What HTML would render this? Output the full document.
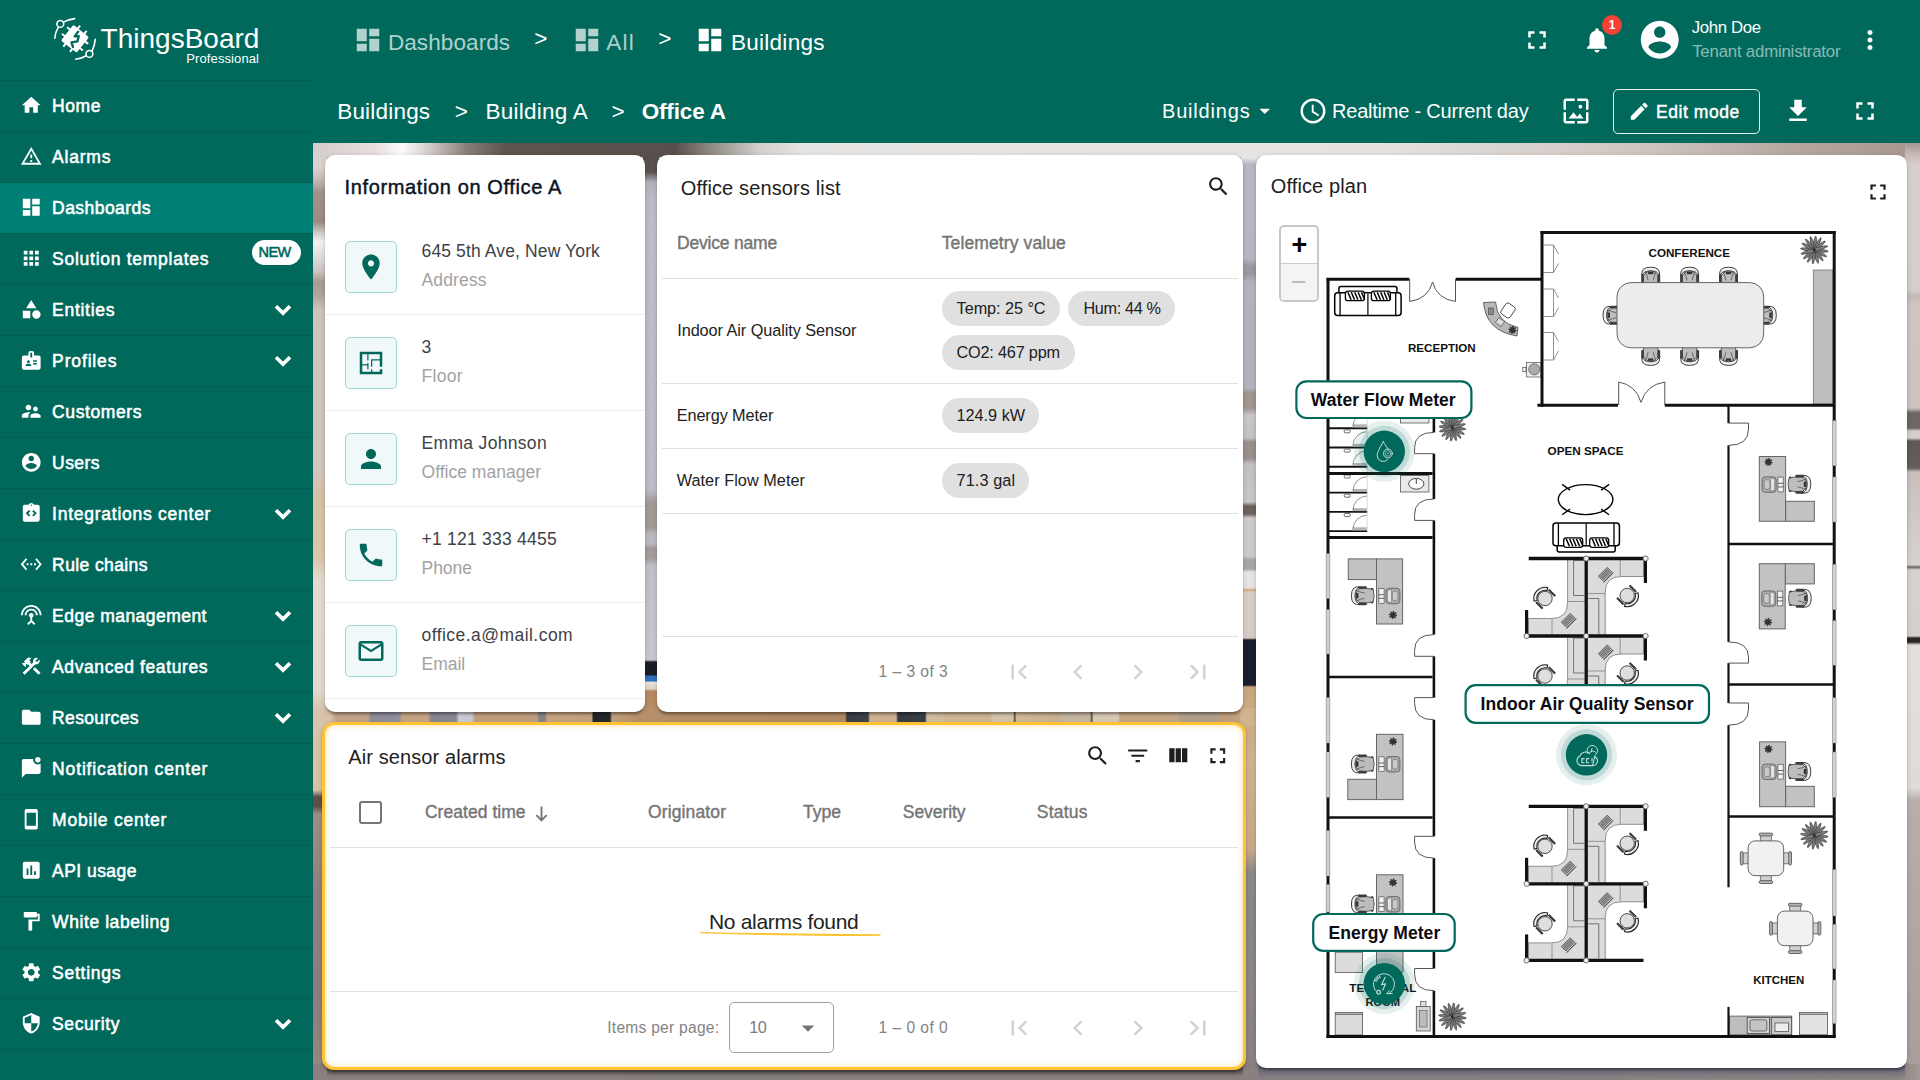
<!DOCTYPE html><html lang="en"><head><meta charset="utf-8"><title>Buildings - Office A</title><style>
html,body{margin:0;padding:0}
body{width:1920px;height:1080px;overflow:hidden;position:relative;font-family:"Liberation Sans",sans-serif;background:#cfc6c0}
.t{position:absolute;white-space:nowrap;line-height:1}
.i{position:absolute;display:block}
.b{position:absolute;box-sizing:border-box}
svg{overflow:visible}
</style></head><body>
<div class="b" style="left:313px;top:143px;width:1607px;height:937px;background:#c4bab5"></div>
<div class="b" style="left:313px;top:143px;width:1607px;height:14px;background:linear-gradient(90deg,#d7cdcb 0px,#e6dfdd 62px,#fbfafa 89px,#d2cbc8 117px,#857c77 155px,#5c544f 192px,#58504c 362px,#959089 402px,#d4d1cf 447px,#e7e5e3 492px,#e5e2e0 1067px,#cfc6c1 1327px,#b6a8a1 1477px,#a6968f 1607px)"></div>
<div class="b" style="left:313px;top:143px;width:14px;height:937px;background:linear-gradient(180deg,#d6cecb 0px,#d9d2cf 25px,#c4b9b5 37px,#a3928c 49px,#9c8a84 79px,#cfc8c6 89px,#f4f3f3 99px,#d9d5d5 119px,#c9c2c0 129px,#a89a94 139px,#b3a59e 153px,#d0c3bc 167px,#d3c6be 327px,#d8c0a8 352px,#dcc6ae 417px,#e3dad2 437px,#e2d8cf 547px,#d8c4ae 569px,#d9c3a8 647px,#5a5048 654px,#5a5048 663px,#9a908c 671px,#8b827f 757px,#8a817e 857px,#958c88 937px)"></div>
<div class="b" style="left:643px;top:155px;width:16px;height:567px;background:linear-gradient(180deg,#554e4a 0px,#5a5350 17px,#b2b0bb 27px,#bdbcc8 45px,#bebdc9 335px,#a39a98 347px,#a59c9a 373px,#bcb8bf 379px,#bcb8bf 389px,#a39a98 393px,#a69e9d 403px,#c2c0ca 411px,#c8c7d0 495px,#c8c7d0 505px,#1c1e26 507px,#1c1e26 520px,#2f6fc0 521px,#2f6fc0 526px,#e8e4de 527px,#e0d6c8 534px,#b58a62 536px,#b98f66 567px)"></div>
<div class="b" style="left:1241px;top:143px;width:17px;height:937px;background:linear-gradient(180deg,#e5e2e0 0px,#e8e6e6 15px,#b9b8c6 21px,#b8b7c5 115px,#9c99a3 123px,#9c99a3 131px,#b5b3bf 139px,#b4b2be 245px,#a39690 250px,#a39690 265px,#c9c6cc 272px,#c6c3c8 295px,#9c908c 299px,#9c908c 315px,#c4c1c4 321px,#cac7c8 359px,#6e625e 363px,#6e625e 371px,#cfcbcc 375px,#cfcbcc 413px,#a9a7a6 417px,#a9a7a6 426px,#e8e6e6 429px,#e6e2e0 445px,#d9a66e 447px,#d8cdc6 449px,#d8cdc6 495px,#1b1f2d 497px,#1b1f2d 542px,#c9a67f 544px,#d2b591 617px,#caa98a 707px,#8e8a8a 729px,#8b8684 925px,#8a8583 937px)"></div>
<div class="b" style="left:1905px;top:143px;width:15px;height:937px;background:linear-gradient(180deg,#a6968f 0px,#c9beb9 13px,#d8d0cc 22px,#d6cecb 147px,#c2b9b5 153px,#cfc6c2 161px,#cdc4c0 265px,#6e6663 270px,#6e6663 285px,#d5cecb 288px,#d5cecb 295px,#5f5855 298px,#665e5b 325px,#c9c0bc 329px,#d8d2cf 422px,#6b6461 424px,#d8d2cf 427px,#d6d0cd 493px,#2a2726 495px,#2a2726 499px,#e4e0dd 502px,#e0dbd8 645px,#b8afab 657px,#a99f9b 917px,#a39a96 937px)"></div>
<div class="b" style="left:313px;top:708px;width:943px;height:18px;background:linear-gradient(90deg,#d9c5ae 0px,#d6c0a8 18px,#c4a58a 23px,#c4a58a 55px,#8f8e9c 58px,#9291a0 86px,#c9a686 89px,#c9a686 115px,#8b8994 118px,#8d8b96 143px,#cfd0dc 146px,#cdcdd9 159px,#c4a282 162px,#c4a282 224px,#8a8588 226px,#8a8588 232px,#c9a582 234px,#c8a480 279px,#26272b 280px,#2a2b2f 297px,#c8a480 299px,#b8906c 327px,#b48c68 532px,#3a3f48 534px,#3d424b 555px,#d2b594 557px,#d0b392 583px,#373c45 585px,#3a3f48 612px,#d9c3a5 614px,#d6c0a2 629px,#d3b999 633px,#d3b999 677px,#d8c8ae 680px,#d8c8ae 700px,#4a4038 702px,#d6bb9a 703px,#cdb395 746px,#c9b9a4 748px,#c9b9a4 777px,#4a4038 779px,#dccdb8 780px,#dccdb8 805px,#c9a988 807px,#c9a988 864px,#b5a390 867px,#b5a390 906px,#c4a27c 908px,#c4a27c 926px,#d2b48e 928px,#d2b48e 943px)"></div>
<div class="b" style="left:313px;top:1064px;width:1607px;height:16px;background:linear-gradient(90deg,#8a817e 0px,#87807d 387px,#89817f 933px,#8c8582 1587px,#a39a96 1607px)"></div>
<div class="b" style="left:1258px;top:1064px;width:647px;height:16px;background:linear-gradient(180deg,#6b687f 4px,rgba(107,104,127,0) 15px)"></div>
<div class="b" style="left:327px;top:1066px;width:916px;height:14px;background:linear-gradient(180deg,rgba(90,84,88,0.9) 4px,rgba(90,84,88,0) 11px)"></div>
<div class="b" style="left:0;top:0;width:313px;height:1080px;background:#00695c"></div>
<svg class="i" style="left:0;top:0;width:130px;height:80px" viewBox="0 0 130 80"><g fill="none" stroke="#fff" stroke-width="1.6" stroke-linecap="round"><path d="M74.7 18.6 Q68.5 19.3 63.8 21.9"/><path d="M58.2 27.4 Q55.2 32.5 54.7 38.3"/><circle cx="60.3" cy="23.9" r="3.4"/><path d="M95.3 39.4 Q94.6 46 92.1 50.8"/><path d="M86.1 55.7 Q81.5 58.6 75.6 59.2"/><circle cx="89.4" cy="53.9" r="3.4"/></g><g transform="translate(75 38.8) rotate(38.5)"><g stroke="#fff" stroke-width="2" stroke-linecap="butt"><line x1="-4.2" y1="-13.4" x2="-4.2" y2="13.4"/><line x1="-13.4" y1="-4.2" x2="13.4" y2="-4.2"/><line x1="4.2" y1="-13.4" x2="4.2" y2="13.4"/><line x1="-13.4" y1="4.2" x2="13.4" y2="4.2"/></g><rect x="-10" y="-10" width="20" height="20" rx="1.6" fill="#fff"/></g><path d="M78.2 31.6 L74.6 36.4 L78.8 36.2 L77.4 41.4 L71.4 42.4 L73 47" fill="none" stroke="#00695c" stroke-width="2.3" stroke-linejoin="round" stroke-linecap="round"/></svg>
<span class="t" style="letter-spacing:0.003px;left:100.60px;top:25.00px;font-size:28px;color:#fff;">ThingsBoard</span>
<span class="t" style="letter-spacing:0.096px;left:186.35px;top:52.00px;font-size:13px;color:#fff;">Professional</span>
<div class="b" style="left:0;top:80px;width:313px;height:1px;background:#005d51"></div>
<svg class="i" viewBox="0 0 24 24" style="left:19.95px;top:94.45px;width:22.5px;height:22.5px;fill:#fff;"><path d="M10 20v-6h4v6h5v-8h3L12 3 2 12h3v8z"/></svg>
<span class="t" style="letter-spacing:0.554px;left:52.12px;top:98.00px;font-size:17.5px;color:#fff;-webkit-text-stroke:0.55px #fff;">Home</span>
<div class="b" style="left:0;top:131px;width:313px;height:1px;background:#005d51"></div>
<svg class="i" viewBox="0 0 24 24" style="left:19.95px;top:145.45px;width:22.5px;height:22.5px;fill:#fff;"><path d="M12 5.99L19.53 19H4.47L12 5.99M12 2L1 21h22L12 2zm1 14h-2v2h2v-2zm0-6h-2v4h2v-4z"/></svg>
<span class="t" style="letter-spacing:0.779px;left:52.12px;top:149.00px;font-size:17.5px;color:#fff;-webkit-text-stroke:0.55px #fff;">Alarms</span>
<div class="b" style="left:0;top:183px;width:313px;height:50px;background:#008075"></div>
<div class="b" style="left:0;top:182px;width:313px;height:1px;background:#005d51"></div>
<svg class="i" viewBox="0 0 24 24" style="left:19.95px;top:196.45px;width:22.5px;height:22.5px;fill:#fff;"><path d="M3 13h8V3H3v10zm0 8h8v-6H3v6zm10 0h8V11h-8v10zm0-18v6h8V3h-8z"/></svg>
<span class="t" style="letter-spacing:0.442px;left:52.12px;top:200.00px;font-size:17.5px;color:#fff;-webkit-text-stroke:0.55px #fff;">Dashboards</span>
<div class="b" style="left:0;top:233px;width:313px;height:1px;background:#005d51"></div>
<svg class="i" viewBox="0 0 24 24" style="left:19.95px;top:247.45px;width:22.5px;height:22.5px;fill:#fff;"><path d="M4 8h4V4H4v4zm6 12h4v-4h-4v4zm-6 0h4v-4H4v4zm0-6h4v-4H4v4zm6 0h4v-4h-4v4zm6-10v4h4V4h-4zm-6 4h4V4h-4v4zm6 6h4v-4h-4v4zm0 6h4v-4h-4v4z"/></svg>
<span class="t" style="letter-spacing:0.727px;left:52.12px;top:251.00px;font-size:17.5px;color:#fff;-webkit-text-stroke:0.55px #fff;">Solution templates</span>
<div class="b" style="left:251.5px;top:239.5px;width:49px;height:25px;border-radius:13px;background:#fff"></div>
<span class="t" style="letter-spacing:-0.547px;left:258.57px;top:245.00px;font-size:14.5px;color:#00695c;-webkit-text-stroke:0.55px #00695c;">NEW</span>
<div class="b" style="left:0;top:284px;width:313px;height:1px;background:#005d51"></div>
<svg class="i" viewBox="0 0 24 24" style="left:19.95px;top:298.45px;width:22.5px;height:22.5px;fill:#fff;"><path d="M12 2l-5.5 9h11zM17.5 13a4.5 4.5 0 1 0 0 9a4.5 4.5 0 1 0 0-9zM3 13.5h8v8H3z"/></svg>
<span class="t" style="letter-spacing:0.708px;left:52.12px;top:302.00px;font-size:17.5px;color:#fff;-webkit-text-stroke:0.55px #fff;">Entities</span>
<svg class="i" viewBox="0 0 24 24" style="left:268.00px;top:294.50px;width:30px;height:30px;fill:#fff;stroke:#fff;stroke-width:0.9"><path d="M16.590 8.590L12 13.170 7.410 8.590 6 10l6 6 6-6z"/></svg>
<div class="b" style="left:0;top:335px;width:313px;height:1px;background:#005d51"></div>
<svg class="i" viewBox="0 0 24 24" style="left:19.95px;top:349.45px;width:22.5px;height:22.5px;fill:#fff;"><path d="M20 7h-5V4c0-1.1-.9-2-2-2h-2c-1.1 0-2 .9-2 2v3H4c-1.1 0-2 .9-2 2v11c0 1.1.9 2 2 2h16c1.1 0 2-.9 2-2V9c0-1.1-.9-2-2-2zM9 12c.83 0 1.5.67 1.5 1.5S9.83 15 9 15s-1.5-.67-1.5-1.5S8.17 12 9 12zm3 6H6v-.75c0-1 2-1.5 3-1.5s3 .5 3 1.5V18zm1-9h-2V4h2v5zm5 7.5h-4V15h4v1.5zm0-3h-4V12h4v1.5z"/></svg>
<span class="t" style="letter-spacing:0.856px;left:52.12px;top:353.00px;font-size:17.5px;color:#fff;-webkit-text-stroke:0.55px #fff;">Profiles</span>
<svg class="i" viewBox="0 0 24 24" style="left:268.00px;top:345.50px;width:30px;height:30px;fill:#fff;stroke:#fff;stroke-width:0.9"><path d="M16.590 8.590L12 13.170 7.410 8.590 6 10l6 6 6-6z"/></svg>
<div class="b" style="left:0;top:386px;width:313px;height:1px;background:#005d51"></div>
<svg class="i" viewBox="0 0 24 24" style="left:19.95px;top:400.45px;width:22.5px;height:22.5px;fill:#fff;"><path d="M16.5 12c1.38 0 2.49-1.12 2.49-2.5S17.88 7 16.5 7C15.12 7 14 8.12 14 9.5s1.12 2.5 2.5 2.5zM9 11c1.66 0 2.99-1.34 2.99-3S10.66 5 9 5C7.34 5 6 6.34 6 8s1.34 3 3 3zm7.5 3c-1.83 0-5.5.92-5.5 2.75V19h11v-2.25c0-1.83-3.67-2.75-5.5-2.75zM9 13c-2.33 0-7 1.17-7 3.5V19h7v-2.25c0-.85.33-2.34 2.37-3.47C10.5 13.1 9.66 13 9 13z"/></svg>
<span class="t" style="letter-spacing:0.593px;left:52.12px;top:404.00px;font-size:17.5px;color:#fff;-webkit-text-stroke:0.55px #fff;">Customers</span>
<div class="b" style="left:0;top:437px;width:313px;height:1px;background:#005d51"></div>
<svg class="i" viewBox="0 0 24 24" style="left:19.95px;top:451.45px;width:22.5px;height:22.5px;fill:#fff;"><path d="M12 2C6.48 2 2 6.48 2 12s4.48 10 10 10 10-4.48 10-10S17.52 2 12 2zm0 3c1.66 0 3 1.34 3 3s-1.34 3-3 3-3-1.34-3-3 1.34-3 3-3zm0 14.2c-2.5 0-4.71-1.28-6-3.22.03-1.99 4-3.08 6-3.08 1.99 0 5.97 1.09 6 3.08-1.29 1.94-3.5 3.22-6 3.22z"/></svg>
<span class="t" style="letter-spacing:0.412px;left:52.12px;top:455.00px;font-size:17.5px;color:#fff;-webkit-text-stroke:0.55px #fff;">Users</span>
<div class="b" style="left:0;top:488px;width:313px;height:1px;background:#005d51"></div>
<svg class="i" viewBox="0 0 24 24" style="left:19.95px;top:502.45px;width:22.5px;height:22.5px;fill:#fff;"><path d="M19 3h-4.18C14.4 1.84 13.3 1 12 1c-1.3 0-2.4.84-2.82 2H5c-.14 0-.27.01-.4.04-.39.08-.74.28-1.01.55-.18.18-.33.4-.43.64-.1.23-.16.49-.16.77v14c0 .27.06.54.16.78s.25.45.43.64c.27.27.62.47 1.01.55.13.02.26.03.4.03h14c1.1 0 2-.9 2-2V5c0-1.1-.9-2-2-2zm-8 11.170l-1.410 1.420L6 12l3.590-3.590L11 9.830 8.830 12 11 14.170zm1-9.920c-.41 0-.75-.34-.75-.75s.34-.75.75-.75.75.34.75.75-.34.75-.75.75zm2.410 11.340L13 14.170 15.170 12 13 9.830l1.410-1.420L18 12l-3.590 3.590z"/></svg>
<span class="t" style="letter-spacing:0.744px;left:52.12px;top:506.00px;font-size:17.5px;color:#fff;-webkit-text-stroke:0.55px #fff;">Integrations center</span>
<svg class="i" viewBox="0 0 24 24" style="left:268.00px;top:498.50px;width:30px;height:30px;fill:#fff;stroke:#fff;stroke-width:0.9"><path d="M16.590 8.590L12 13.170 7.410 8.590 6 10l6 6 6-6z"/></svg>
<div class="b" style="left:0;top:539px;width:313px;height:1px;background:#005d51"></div>
<svg class="i" viewBox="0 0 24 24" style="left:19.95px;top:553.45px;width:22.5px;height:22.5px;fill:#fff;"><path d="M7.77 6.76L6.23 5.48.82 12l5.41 6.52 1.54-1.28L3.42 12l4.35-5.24zM7 13h2v-2H7v2zm10-2h-2v2h2v-2zm-6 2h2v-2h-2v2zm6.77-7.520l-1.540 1.280L20.580 12l-4.350 5.240 1.540 1.280L23.180 12l-5.410-6.520z"/></svg>
<span class="t" style="letter-spacing:0.390px;left:52.12px;top:557.00px;font-size:17.5px;color:#fff;-webkit-text-stroke:0.55px #fff;">Rule chains</span>
<div class="b" style="left:0;top:590px;width:313px;height:1px;background:#005d51"></div>
<svg class="i" viewBox="0 0 24 24" style="left:19.95px;top:604.45px;width:22.5px;height:22.5px;fill:#fff;"><path d="M12 5c-3.870 0-7 3.130-7 7h2c0-2.760 2.240-5 5-5s5 2.240 5 5h2c0-3.870-3.130-7-7-7zm1 9.290c.880-.390 1.500-1.260 1.500-2.290 0-1.380-1.120-2.500-2.500-2.500S9.500 10.620 9.500 12c0 1.020.620 1.900 1.500 2.290v3.300L7.590 21 9 22.410l3-3 3 3L16.410 21 13 17.590v-3.300zM12 1C5.930 1 1 5.930 1 12h2c0-4.970 4.030-9 9-9s9 4.030 9 9h2c0-6.070-4.930-11-11-11z"/></svg>
<span class="t" style="letter-spacing:0.461px;left:52.12px;top:608.00px;font-size:17.5px;color:#fff;-webkit-text-stroke:0.55px #fff;">Edge management</span>
<svg class="i" viewBox="0 0 24 24" style="left:268.00px;top:600.50px;width:30px;height:30px;fill:#fff;stroke:#fff;stroke-width:0.9"><path d="M16.590 8.590L12 13.170 7.410 8.590 6 10l6 6 6-6z"/></svg>
<div class="b" style="left:0;top:641px;width:313px;height:1px;background:#005d51"></div>
<svg class="i" viewBox="0 0 24 24" style="left:19.95px;top:655.45px;width:22.5px;height:22.5px;fill:#fff;"><path d="M13.783 15.172l2.121-2.121 5.996 5.996-2.121 2.121zM17.5 10c1.930 0 3.500-1.570 3.500-3.500 0-.580-.160-1.120-.410-1.600l-2.700 2.700-1.490-1.490 2.700-2.700c-.480-.250-1.020-.410-1.600-.410C15.570 3 14 4.570 14 6.500c0 .410.080.800.210 1.160l-1.850 1.850-1.780-1.780.710-.710-1.410-1.410L12 3.490c-1.170-1.170-3.070-1.170-4.240 0L4.220 7.030l1.410 1.410H2.810l-.710.710 3.540 3.540.710-.710V9.150l1.410 1.410.710-.710 1.780 1.780-7.410 7.410 2.120 2.120L16.340 9.790c.360.130.750.210 1.160.210z"/></svg>
<span class="t" style="letter-spacing:0.588px;left:52.12px;top:659.00px;font-size:17.5px;color:#fff;-webkit-text-stroke:0.55px #fff;">Advanced features</span>
<svg class="i" viewBox="0 0 24 24" style="left:268.00px;top:651.50px;width:30px;height:30px;fill:#fff;stroke:#fff;stroke-width:0.9"><path d="M16.590 8.590L12 13.170 7.410 8.590 6 10l6 6 6-6z"/></svg>
<div class="b" style="left:0;top:692px;width:313px;height:1px;background:#005d51"></div>
<svg class="i" viewBox="0 0 24 24" style="left:19.95px;top:706.45px;width:22.5px;height:22.5px;fill:#fff;"><path d="M10 4H4c-1.100 0-1.990.900-1.990 2L2 18c0 1.100.900 2 2 2h16c1.100 0 2-.900 2-2V8c0-1.100-.900-2-2-2h-8l-2-2z"/></svg>
<span class="t" style="letter-spacing:0.337px;left:52.12px;top:710.00px;font-size:17.5px;color:#fff;-webkit-text-stroke:0.55px #fff;">Resources</span>
<svg class="i" viewBox="0 0 24 24" style="left:268.00px;top:702.50px;width:30px;height:30px;fill:#fff;stroke:#fff;stroke-width:0.9"><path d="M16.590 8.590L12 13.170 7.410 8.590 6 10l6 6 6-6z"/></svg>
<div class="b" style="left:0;top:743px;width:313px;height:1px;background:#005d51"></div>
<svg class="i" viewBox="0 0 24 24" style="left:19.95px;top:757.45px;width:22.5px;height:22.5px;fill:#fff;"><path d="M22 6.980V16c0 1.100-.900 2-2 2H6l-4 4V4c0-1.100.900-2 2-2h10.100c-.060.320-.100.660-.100 1 0 2.760 2.240 5 5 5 1.130 0 2.160-.390 3-1.020zM16 3c0 1.660 1.340 3 3 3s3-1.340 3-3-1.340-3-3-3-3 1.340-3 3z"/></svg>
<span class="t" style="letter-spacing:0.848px;left:52.12px;top:761.00px;font-size:17.5px;color:#fff;-webkit-text-stroke:0.55px #fff;">Notification center</span>
<div class="b" style="left:0;top:794px;width:313px;height:1px;background:#005d51"></div>
<svg class="i" viewBox="0 0 24 24" style="left:19.95px;top:808.45px;width:22.5px;height:22.5px;fill:#fff;"><path d="M17 1.010L7 1c-1.100 0-2 .900-2 2v18c0 1.100.900 2 2 2h10c1.100 0 2-.900 2-2V3c0-1.100-.900-1.990-2-1.990zM17 19H7V5h10v14z"/></svg>
<span class="t" style="letter-spacing:0.774px;left:52.12px;top:812.00px;font-size:17.5px;color:#fff;-webkit-text-stroke:0.55px #fff;">Mobile center</span>
<div class="b" style="left:0;top:845px;width:313px;height:1px;background:#005d51"></div>
<svg class="i" viewBox="0 0 24 24" style="left:19.95px;top:859.45px;width:22.5px;height:22.5px;fill:#fff;"><path d="M19 3H5c-1.100 0-2 .900-2 2v14c0 1.100.900 2 2 2h14c1.100 0 2-.900 2-2V5c0-1.100-.900-2-2-2zM9 17H7v-7h2v7zm4 0h-2V7h2v10zm4 0h-2v-4h2v4z"/></svg>
<span class="t" style="letter-spacing:0.450px;left:52.12px;top:863.00px;font-size:17.5px;color:#fff;-webkit-text-stroke:0.55px #fff;">API usage</span>
<div class="b" style="left:0;top:896px;width:313px;height:1px;background:#005d51"></div>
<svg class="i" viewBox="0 0 24 24" style="left:19.95px;top:910.45px;width:22.5px;height:22.5px;fill:#fff;"><path d="M18 4V3c0-.550-.450-1-1-1H5c-.550 0-1 .450-1 1v4c0 .550.450 1 1 1h12c.550 0 1-.450 1-1V6h1v4H9v11c0 .550.450 1 1 1h2c.550 0 1-.450 1-1v-9h8V4h-3z"/></svg>
<span class="t" style="letter-spacing:0.571px;left:52.12px;top:914.00px;font-size:17.5px;color:#fff;-webkit-text-stroke:0.55px #fff;">White labeling</span>
<div class="b" style="left:0;top:947px;width:313px;height:1px;background:#005d51"></div>
<svg class="i" viewBox="0 0 24 24" style="left:19.95px;top:961.45px;width:22.5px;height:22.5px;fill:#fff;"><path d="M19.140 12.940c.040-.300.060-.610.060-.940 0-.320-.020-.640-.070-.940l2.030-1.580c.180-.140.230-.410.120-.610l-1.920-3.320c-.120-.220-.370-.290-.590-.220l-2.390.960c-.500-.380-1.030-.700-1.620-.940l-.360-2.540c-.040-.240-.240-.410-.480-.410h-3.840c-.240 0-.430.170-.470.410l-.360 2.540c-.590.240-1.130.570-1.620.940l-2.390-.960c-.220-.080-.470 0-.590.220L2.740 8.870c-.120.210-.080.470.120.610l2.030 1.580c-.050.300-.090.630-.090.940s.020.640.070.940l-2.030 1.580c-.180.140-.230.410-.120.610l1.920 3.320c.120.220.370.290.590.220l2.390-.960c.500.380 1.030.700 1.620.940l.360 2.540c.050.240.240.410.480.410h3.840c.240 0 .440-.170.470-.410l.360-2.540c.590-.240 1.130-.560 1.620-.940l2.390.960c.220.080.470 0 .590-.220l1.920-3.320c.120-.220.070-.470-.120-.610l-2.010-1.580zM12 15.600c-1.980 0-3.600-1.620-3.600-3.600s1.620-3.600 3.600-3.600 3.600 1.620 3.600 3.600-1.620 3.600-3.600 3.600z"/></svg>
<span class="t" style="letter-spacing:0.731px;left:52.12px;top:965.00px;font-size:17.5px;color:#fff;-webkit-text-stroke:0.55px #fff;">Settings</span>
<div class="b" style="left:0;top:998px;width:313px;height:1px;background:#005d51"></div>
<svg class="i" viewBox="0 0 24 24" style="left:19.95px;top:1012.45px;width:22.5px;height:22.5px;fill:#fff;"><path d="M12 1L3 5v6c0 5.550 3.840 10.740 9 12 5.160-1.260 9-6.450 9-12V5l-9-4zm0 10.990h7c-.530 4.120-3.280 7.790-7 8.940V12H5V6.300l7-3.110v8.800z"/></svg>
<span class="t" style="letter-spacing:0.590px;left:52.12px;top:1016.00px;font-size:17.5px;color:#fff;-webkit-text-stroke:0.55px #fff;">Security</span>
<svg class="i" viewBox="0 0 24 24" style="left:268.00px;top:1008.50px;width:30px;height:30px;fill:#fff;stroke:#fff;stroke-width:0.9"><path d="M16.590 8.590L12 13.170 7.410 8.590 6 10l6 6 6-6z"/></svg>
<div class="b" style="left:0;top:1049px;width:313px;height:1px;background:#005d51"></div>
<div class="b" style="left:313px;top:0;width:1607px;height:143px;background:#00695c"></div>
<svg class="i" viewBox="0 0 24 24" style="left:352.50px;top:24.50px;width:30px;height:30px;fill:rgba(255,255,255,0.7);"><path d="M3 13h8V3H3v10zm0 8h8v-6H3v6zm10 0h8V11h-8v10zm0-18v6h8V3h-8z"/></svg>
<span class="t" style="letter-spacing:0.102px;left:387.88px;top:32.00px;font-size:22.5px;color:rgba(255,255,255,0.7);">Dashboards</span>
<span class="t" style="letter-spacing:0.109px;left:534.27px;top:28.00px;font-size:22.5px;color:#fff;">&gt;</span>
<svg class="i" viewBox="0 0 24 24" style="left:571.80px;top:24.50px;width:30px;height:30px;fill:rgba(255,255,255,0.7);"><path d="M3 13h8V3H3v10zm0 8h8v-6H3v6zm10 0h8V11h-8v10zm0-18v6h8V3h-8z"/></svg>
<span class="t" style="letter-spacing:1.267px;left:606.27px;top:32.00px;font-size:22.5px;color:rgba(255,255,255,0.7);">All</span>
<span class="t" style="letter-spacing:0.109px;left:658.27px;top:28.00px;font-size:22.5px;color:#fff;">&gt;</span>
<svg class="i" viewBox="0 0 24 24" style="left:695.20px;top:24.50px;width:30px;height:30px;fill:#fff;"><path d="M3 13h8V3H3v10zm0 8h8v-6H3v6zm10 0h8V11h-8v10zm0-18v6h8V3h-8z"/></svg>
<span class="t" style="letter-spacing:0.292px;left:730.88px;top:32.00px;font-size:22.5px;color:#fff;">Buildings</span>
<svg class="i" viewBox="0 0 24 24" style="left:1522.40px;top:25.00px;width:30px;height:30px;fill:#fff;"><path d="M7 14H5v5h5v-2H7v-3zm-2-4h2V7h3V5H5v5zm12 7h-3v2h5v-5h-2v3zM14 5v2h3v3h2V5h-5z"/></svg>
<svg class="i" viewBox="0 0 24 24" style="left:1582.30px;top:25.00px;width:30px;height:30px;fill:#fff;"><path d="M12 22c1.100 0 2-.900 2-2h-4c0 1.100.890 2 2 2zm6-6v-5c0-3.070-1.640-5.640-4.500-6.320V4c0-.830-.670-1.500-1.500-1.500s-1.500.670-1.500 1.500v.680C7.630 5.360 6 7.920 6 11v5l-2 2v1h16v-1l-2-2z"/></svg>
<div class="b" style="left:1602px;top:15px;width:20px;height:20px;border-radius:10px;background:#f44336"></div>
<span class="t" style="left:1608.70px;top:19.00px;font-size:12px;color:#fff;font-weight:700;">1</span>
<svg class="i" viewBox="0 0 24 24" style="left:1637.25px;top:17.45px;width:45.5px;height:45.5px;fill:#fff;"><path d="M12 2C6.48 2 2 6.48 2 12s4.48 10 10 10 10-4.48 10-10S17.52 2 12 2zm0 3c1.66 0 3 1.34 3 3s-1.34 3-3 3-3-1.34-3-3 1.34-3 3-3zm0 14.2c-2.5 0-4.71-1.28-6-3.22.03-1.99 4-3.08 6-3.08 1.99 0 5.97 1.09 6 3.08-1.29 1.94-3.5 3.22-6 3.22z"/></svg>
<span class="t" style="letter-spacing:-0.338px;left:1691.66px;top:20.00px;font-size:16.8px;color:#fff;">John Doe</span>
<span class="t" style="letter-spacing:-0.193px;left:1692.16px;top:44.00px;font-size:16.8px;color:rgba(255,255,255,0.55);">Tenant administrator</span>
<svg class="i" viewBox="0 0 24 24" style="left:1855.00px;top:25.00px;width:30px;height:30px;fill:#fff;"><path d="M12 8c1.100 0 2-.900 2-2s-.900-2-2-2-2 .900-2 2 .900 2 2 2zm0 2c-1.100 0-2 .900-2 2s.900 2 2 2 2-.900 2-2-.900-2-2-2zm0 6c-1.100 0-2 .900-2 2s.900 2 2 2 2-.900 2-2-.900-2-2-2z"/></svg>
<span class="t" style="letter-spacing:0.205px;left:337.18px;top:101.00px;font-size:22.5px;color:#fff;">Buildings</span>
<span class="t" style="letter-spacing:-0.391px;left:454.68px;top:101.00px;font-size:22.5px;color:#fff;">&gt;</span>
<span class="t" style="letter-spacing:0.252px;left:485.38px;top:101.00px;font-size:22.5px;color:#fff;">Building A</span>
<span class="t" style="letter-spacing:-0.391px;left:611.38px;top:101.00px;font-size:22.5px;color:#fff;">&gt;</span>
<span class="t" style="letter-spacing:-0.141px;left:641.67px;top:101.00px;font-size:22.5px;color:#fff;font-weight:700;">Office A</span>
<span class="t" style="letter-spacing:0.816px;left:1162.00px;top:101.00px;font-size:20px;color:#fff;">Buildings</span>
<svg class="i" viewBox="0 0 24 24" style="left:1252.45px;top:97.85px;width:25.5px;height:25.5px;fill:#fff;"><path d="M7 10l5 5 5-5z"/></svg>
<svg class="i" viewBox="0 0 24 24" style="left:1297.50px;top:95.80px;width:30px;height:30px;fill:#fff;"><path d="M11.990 2C6.470 2 2 6.480 2 12s4.470 10 9.990 10C17.520 22 22 17.520 22 12S17.520 2 11.990 2zM12 20c-4.420 0-8-3.580-8-8s3.580-8 8-8 8 3.580 8 8-3.580 8-8 8zm.500-13H11v6l5.250 3.150.750-1.230-4.500-2.670z"/></svg>
<span class="t" style="letter-spacing:-0.214px;left:1332.00px;top:101.00px;font-size:20px;color:#fff;">Realtime - Current day</span>
<svg class="i" viewBox="0 0 24 24" style="left:1560.60px;top:96.00px;width:30px;height:30px;fill:#fff;"><path d="M4 4h7V2H4c-1.100 0-2 .900-2 2v7h2V4zm6 9l-4 5h12l-3-4-2.030 2.710L10 13zm7-4.500c0-.830-.670-1.500-1.500-1.500S14 7.670 14 8.500s.670 1.500 1.500 1.500S17 9.330 17 8.500zM20 2h-7v2h7v7h2V4c0-1.100-.900-2-2-2zm0 18h-7v2h7c1.100 0 2-.900 2-2v-7h-2v7zM4 13H2v7c0 1.100.900 2 2 2h7v-2H4v-7z"/></svg>
<div class="b" style="left:1613px;top:89px;width:147px;height:45px;border:1px solid rgba(255,255,255,0.9);border-radius:5px"></div>
<svg class="i" viewBox="0 0 24 24" style="left:1627.85px;top:99.75px;width:22.5px;height:22.5px;fill:#fff;"><path d="M3 17.250V21h3.750L17.810 9.940l-3.750-3.750L3 17.250zM20.710 7.040c.390-.390.390-1.020 0-1.410l-2.340-2.340c-.390-.390-1.020-.390-1.410 0l-1.830 1.830 3.750 3.750 1.830-1.830z"/></svg>
<span class="t" style="letter-spacing:0.544px;left:1656.12px;top:104.00px;font-size:17.5px;color:#fff;-webkit-text-stroke:0.45px #fff;">Edit mode</span>
<svg class="i" viewBox="0 0 24 24" style="left:1782.50px;top:96.00px;width:30px;height:30px;fill:#fff;"><path d="M19 9h-4V3H9v6H5l7 7 7-7zM5 18v2h14v-2H5z"/></svg>
<svg class="i" viewBox="0 0 24 24" style="left:1850.00px;top:96.00px;width:30px;height:30px;fill:#fff;"><path d="M7 14H5v5h5v-2H7v-3zm-2-4h2V7h3V5H5v5zm12 7h-3v2h5v-5h-2v3zM14 5v2h3v3h2V5h-5z"/></svg>
<div class="b" style="left:325px;top:155px;width:320px;height:557px;background:#fff;border-radius:10px;box-shadow:0 3.75px 1.25px -2.5px rgba(0,0,0,.2),0 2.5px 2.5px 0 rgba(0,0,0,.14),0 1.25px 6.25px 0 rgba(0,0,0,.12)"></div>
<span class="t" style="letter-spacing:0.624px;left:344.60px;top:177.00px;font-size:20px;color:#0a1426;-webkit-text-stroke:0.45px #0a1426;">Information on Office A</span>
<div class="b" style="left:345px;top:241px;width:52px;height:52px;border-radius:5px;background:#f0f8f9;border:1px solid #9adbd3"></div>
<svg class="i" viewBox="0 0 24 24" style="left:356.00px;top:251.90px;width:30px;height:30px;fill:#00695c;"><path d="M12 2C8.130 2 5 5.130 5 9c0 5.250 7 13 7 13s7-7.750 7-13c0-3.870-3.130-7-7-7zm0 9.500c-1.380 0-2.500-1.120-2.500-2.500s1.120-2.500 2.500-2.500 2.500 1.120 2.500 2.500-1.120 2.500-2.500 2.500z"/></svg>
<span class="t" style="letter-spacing:0.128px;left:421.52px;top:243.00px;font-size:17.5px;color:#3e4247;">645 5th Ave, New York</span>
<span class="t" style="letter-spacing:0.141px;left:421.52px;top:272.00px;font-size:17.5px;color:#a2a2a2;">Address</span>
<div class="b" style="left:325px;top:314px;width:320px;height:1px;background:#ececec"></div>
<div class="b" style="left:345px;top:337px;width:52px;height:52px;border-radius:5px;background:#f0f8f9;border:1px solid #9adbd3"></div>
<svg class="i" viewBox="0 0 24 24" style="left:356.00px;top:347.90px;width:30px;height:30px;fill:#00695c;"><path d="M10,5V10H9V5H5V13H9V12H10V17H9V14H5V19H12V17H13V19H19V17H21V21H3V3H21V15H19V10H13V15H12V9H19V5H10Z"/></svg>
<span class="t" style="letter-spacing:0.516px;left:421.52px;top:339.00px;font-size:17.5px;color:#3e4247;">3</span>
<span class="t" style="letter-spacing:0.294px;left:421.52px;top:368.00px;font-size:17.5px;color:#a2a2a2;">Floor</span>
<div class="b" style="left:325px;top:410px;width:320px;height:1px;background:#ececec"></div>
<div class="b" style="left:345px;top:433px;width:52px;height:52px;border-radius:5px;background:#f0f8f9;border:1px solid #9adbd3"></div>
<svg class="i" viewBox="0 0 24 24" style="left:356.00px;top:443.90px;width:30px;height:30px;fill:#00695c;"><path d="M12 12c2.210 0 4-1.790 4-4s-1.790-4-4-4-4 1.790-4 4 1.790 4 4 4zm0 2c-2.670 0-8 1.340-8 4v2h16v-2c0-2.660-5.330-4-8-4z"/></svg>
<span class="t" style="letter-spacing:0.323px;left:421.52px;top:435.00px;font-size:17.5px;color:#3e4247;">Emma Johnson</span>
<span class="t" style="letter-spacing:0.009px;left:421.52px;top:464.00px;font-size:17.5px;color:#a2a2a2;">Office manager</span>
<div class="b" style="left:325px;top:506px;width:320px;height:1px;background:#ececec"></div>
<div class="b" style="left:345px;top:529px;width:52px;height:52px;border-radius:5px;background:#f0f8f9;border:1px solid #9adbd3"></div>
<svg class="i" viewBox="0 0 24 24" style="left:356.00px;top:539.90px;width:30px;height:30px;fill:#00695c;"><path d="M6.620 10.790c1.440 2.830 3.760 5.140 6.590 6.590l2.200-2.200c.270-.270.670-.360 1.020-.240 1.120.370 2.330.570 3.570.570.550 0 1 .450 1 1V20c0 .550-.450 1-1 1-9.390 0-17-7.610-17-17 0-.550.450-1 1-1h3.500c.550 0 1 .450 1 1 0 1.250.200 2.450.570 3.570.110.350.030.740-.250 1.020l-2.200 2.200z"/></svg>
<span class="t" style="letter-spacing:0.234px;left:421.52px;top:531.00px;font-size:17.5px;color:#3e4247;">+1 121 333 4455</span>
<span class="t" style="letter-spacing:-0.040px;left:421.52px;top:560.00px;font-size:17.5px;color:#a2a2a2;">Phone</span>
<div class="b" style="left:325px;top:602px;width:320px;height:1px;background:#ececec"></div>
<div class="b" style="left:345px;top:625px;width:52px;height:52px;border-radius:5px;background:#f0f8f9;border:1px solid #9adbd3"></div>
<svg class="i" viewBox="0 0 24 24" style="left:356.00px;top:635.90px;width:30px;height:30px;fill:#00695c;"><path d="M20 4H4c-1.100 0-1.990.900-1.990 2L2 18c0 1.100.900 2 2 2h16c1.100 0 2-.900 2-2V6c0-1.100-.900-2-2-2zm0 14H4V8l8 5 8-5v10zm-8-7L4 6h16l-8 5z"/></svg>
<span class="t" style="letter-spacing:0.454px;left:421.52px;top:627.00px;font-size:17.5px;color:#3e4247;">office.a@mail.com</span>
<span class="t" style="letter-spacing:-0.004px;left:421.52px;top:656.00px;font-size:17.5px;color:#a2a2a2;">Email</span>
<div class="b" style="left:325px;top:698px;width:320px;height:1px;background:#ececec"></div>
<div class="b" style="left:657px;top:155px;width:586px;height:557px;background:#fff;border-radius:10px;box-shadow:0 3.75px 1.25px -2.5px rgba(0,0,0,.2),0 2.5px 2.5px 0 rgba(0,0,0,.14),0 1.25px 6.25px 0 rgba(0,0,0,.12)"></div>
<span class="t" style="letter-spacing:0.135px;left:680.70px;top:178.00px;font-size:20px;color:#212121;">Office sensors list</span>
<svg class="i" viewBox="0 0 24 24" style="left:1205.50px;top:174.30px;width:25px;height:25px;fill:#1e1e1e;"><path d="M15.500 14h-.790l-.280-.270C15.410 12.590 16 11.110 16 9.500 16 5.910 13.090 3 9.500 3S3 5.910 3 9.500 5.910 16 9.500 16c1.610 0 3.090-.590 4.230-1.570l.270.280v.790l5 4.990L20.490 19l-4.990-5zm-6 0C7.010 14 5 11.990 5 9.500S7.010 5 9.500 5 14 7.010 14 9.500 11.990 14 9.500 14z"/></svg>
<span class="t" style="letter-spacing:-0.209px;left:677.12px;top:235.00px;font-size:17.5px;color:#757575;-webkit-text-stroke:0.4px #757575;">Device name</span>
<span class="t" style="letter-spacing:0.113px;left:941.73px;top:235.00px;font-size:17.5px;color:#757575;-webkit-text-stroke:0.4px #757575;">Telemetry value</span>
<div class="b" style="left:662px;top:278px;width:576px;height:1px;background:#e0e0e0"></div>
<div class="b" style="left:662px;top:383px;width:576px;height:1px;background:#e0e0e0"></div>
<div class="b" style="left:662px;top:448px;width:576px;height:1px;background:#e0e0e0"></div>
<div class="b" style="left:662px;top:513px;width:576px;height:1px;background:#e0e0e0"></div>
<div class="b" style="left:662px;top:636px;width:576px;height:1px;background:#e0e0e0"></div>
<span class="t" style="letter-spacing:-0.056px;left:677.19px;top:322.00px;font-size:16.25px;color:#212121;">Indoor Air Quality Sensor</span>
<span class="t" style="letter-spacing:-0.084px;left:676.69px;top:407.00px;font-size:16.25px;color:#212121;">Energy Meter</span>
<span class="t" style="letter-spacing:0.046px;left:676.69px;top:472.00px;font-size:16.25px;color:#212121;">Water Flow Meter</span>
<div class="b" style="left:942px;top:291px;width:118px;height:35px;border-radius:17.5px;background:#e0e0e0"></div><span class="t" style="letter-spacing:-0.056px;left:956.59px;top:300.00px;font-size:16.25px;color:#212121;">Temp: 25 °C</span>
<div class="b" style="left:1068.3px;top:291px;width:106.7px;height:35px;border-radius:17.5px;background:#e0e0e0"></div><span class="t" style="letter-spacing:-0.358px;left:1083.49px;top:300.00px;font-size:16.25px;color:#212121;">Hum: 44 %</span>
<div class="b" style="left:942px;top:335px;width:133px;height:35px;border-radius:17.5px;background:#e0e0e0"></div><span class="t" style="letter-spacing:-0.188px;left:956.49px;top:344.00px;font-size:16.25px;color:#212121;">CO2: 467 ppm</span>
<div class="b" style="left:942px;top:398px;width:97px;height:35px;border-radius:17.5px;background:#e0e0e0"></div><span class="t" style="letter-spacing:-0.005px;left:956.49px;top:407.00px;font-size:16.25px;color:#212121;">124.9 kW</span>
<div class="b" style="left:942px;top:463px;width:87px;height:35px;border-radius:17.5px;background:#e0e0e0"></div><span class="t" style="letter-spacing:0.113px;left:956.49px;top:472.00px;font-size:16.25px;color:#212121;">71.3 gal</span>
<span class="t" style="letter-spacing:0.470px;left:878.52px;top:664.00px;font-size:15.6px;color:#838383;">1 – 3 of 3</span>
<svg class="i" viewBox="0 0 24 24" style="left:1003.50px;top:656.70px;width:30px;height:30px;fill:#d2d2d2;"><path d="M18.410 16.590L13.820 12l4.590-4.590L17 6l-6 6 6 6zM6 6h2v12H6z"/></svg>
<svg class="i" viewBox="0 0 24 24" style="left:1063.30px;top:656.70px;width:30px;height:30px;fill:#d2d2d2;"><path d="M15.410 7.410L14 6l-6 6 6 6 1.410-1.410L10.830 12z"/></svg>
<svg class="i" viewBox="0 0 24 24" style="left:1123.30px;top:656.70px;width:30px;height:30px;fill:#d2d2d2;"><path d="M10 6L8.590 7.410 13.170 12l-4.580 4.590L10 18l6-6z"/></svg>
<svg class="i" viewBox="0 0 24 24" style="left:1182.70px;top:656.70px;width:30px;height:30px;fill:#d2d2d2;"><path d="M5.590 7.410L10.180 12l-4.590 4.590L7 18l6-6-6-6zM16 6h2v12h-2z"/></svg>
<div class="b" style="left:322px;top:722px;width:924px;height:348px;background:#fff;border:3px solid #fcc332;border-radius:12px;box-shadow:inset 0 0 5px 1px #ffe2b0,0 3.75px 1.25px -2.5px rgba(0,0,0,.2),0 2.5px 2.5px 0 rgba(0,0,0,.14),0 1.25px 6.25px 0 rgba(0,0,0,.12)"></div>
<span class="t" style="letter-spacing:0.099px;left:348.30px;top:747.00px;font-size:20px;color:#212121;">Air sensor alarms</span>
<svg class="i" viewBox="0 0 24 24" style="left:1084.95px;top:742.75px;width:25.5px;height:25.5px;fill:#1e1e1e;"><path d="M15.500 14h-.790l-.280-.270C15.410 12.590 16 11.110 16 9.500 16 5.910 13.090 3 9.500 3S3 5.910 3 9.500 5.910 16 9.500 16c1.610 0 3.090-.590 4.230-1.570l.270.280v.790l5 4.990L20.490 19l-4.990-5zm-6 0C7.010 14 5 11.990 5 9.500S7.010 5 9.500 5 14 7.010 14 9.500 11.990 14 9.500 14z"/></svg>
<svg class="i" viewBox="0 0 24 24" style="left:1125.25px;top:742.75px;width:25.5px;height:25.5px;fill:#1e1e1e;"><path d="M10 18h4v-2h-4v2zM3 6v2h18V6H3zm3 7h12v-2H6v2z"/></svg>
<svg class="i" viewBox="0 0 24 24" style="left:1165.25px;top:742.75px;width:25.5px;height:25.5px;fill:#1e1e1e;"><path d="M10 18h5V5h-5v13zm-6 0h5V5H4v13zM16 5v13h5V5h-5z"/></svg>
<svg class="i" viewBox="0 0 24 24" style="left:1205.05px;top:742.75px;width:25.5px;height:25.5px;fill:#1e1e1e;"><path d="M7 14H5v5h5v-2H7v-3zm-2-4h2V7h3V5H5v5zm12 7h-3v2h5v-5h-2v3zM14 5v2h3v3h2V5h-5z"/></svg>
<div class="b" style="left:359px;top:801px;width:22.5px;height:22.5px;border:2.4px solid #757575;border-radius:3px"></div>
<span class="t" style="letter-spacing:0.042px;left:424.93px;top:804.00px;font-size:17.5px;color:#757575;-webkit-text-stroke:0.4px #757575;">Created time</span>
<svg class="i" style="left:530px;top:800px;width:24px;height:28px" viewBox="530 800 24 28"><path d="M541.5 806.6 V820 M536.4 815.2 L541.5 820.4 L546.6 815.2" fill="none" stroke="#757575" stroke-width="1.9"/></svg>
<span class="t" style="letter-spacing:0.145px;left:647.92px;top:804.00px;font-size:17.5px;color:#757575;-webkit-text-stroke:0.4px #757575;">Originator</span>
<span class="t" style="letter-spacing:-0.001px;left:803.12px;top:804.00px;font-size:17.5px;color:#757575;-webkit-text-stroke:0.4px #757575;">Type</span>
<span class="t" style="letter-spacing:-0.081px;left:902.83px;top:804.00px;font-size:17.5px;color:#757575;-webkit-text-stroke:0.4px #757575;">Severity</span>
<span class="t" style="letter-spacing:0.205px;left:1036.83px;top:804.00px;font-size:17.5px;color:#757575;-webkit-text-stroke:0.4px #757575;">Status</span>
<div class="b" style="left:330px;top:847px;width:908px;height:1px;background:#e0e0e0"></div>
<span class="t" style="letter-spacing:-0.306px;left:708.95px;top:911.00px;font-size:21px;color:#212121;">No alarms found</span>
<svg class="i" style="left:690px;top:925px;width:200px;height:16px" viewBox="690 925 200 16"><path d="M700.5 932.6 Q790 936 880 935 Q790 934.5 700.5 932.6Z" fill="#fcc332" stroke="#fcc332" stroke-width="1.3" stroke-linejoin="round"/></svg>
<div class="b" style="left:330px;top:991px;width:908px;height:1px;background:#e0e0e0"></div>
<span class="t" style="letter-spacing:0.250px;left:607.22px;top:1020.00px;font-size:15.6px;color:#838383;">Items per page:</span>
<div class="b" style="left:729px;top:1001.5px;width:104.5px;height:51px;border:1px solid #a2a2a2;border-radius:5px"></div>
<span class="t" style="letter-spacing:-0.458px;left:749.19px;top:1019.00px;font-size:16.25px;color:#7a7a7a;">10</span>
<svg class="i" viewBox="0 0 24 24" style="left:793.00px;top:1013.20px;width:30px;height:30px;fill:#757575;"><path d="M7 10l5 5 5-5z"/></svg>
<span class="t" style="letter-spacing:0.470px;left:878.52px;top:1020.00px;font-size:15.6px;color:#838383;">1 – 0 of 0</span>
<svg class="i" viewBox="0 0 24 24" style="left:1003.50px;top:1012.50px;width:30px;height:30px;fill:#d2d2d2;"><path d="M18.410 16.590L13.820 12l4.590-4.590L17 6l-6 6 6 6zM6 6h2v12H6z"/></svg>
<svg class="i" viewBox="0 0 24 24" style="left:1063.30px;top:1012.50px;width:30px;height:30px;fill:#d2d2d2;"><path d="M15.410 7.410L14 6l-6 6 6 6 1.410-1.410L10.830 12z"/></svg>
<svg class="i" viewBox="0 0 24 24" style="left:1123.30px;top:1012.50px;width:30px;height:30px;fill:#d2d2d2;"><path d="M10 6L8.590 7.410 13.170 12l-4.580 4.590L10 18l6-6z"/></svg>
<svg class="i" viewBox="0 0 24 24" style="left:1182.70px;top:1012.50px;width:30px;height:30px;fill:#d2d2d2;"><path d="M5.590 7.410L10.180 12l-4.590 4.590L7 18l6-6-6-6zM16 6h2v12h-2z"/></svg>
<div class="b" style="left:1256px;top:155px;width:651px;height:913px;background:#fff;border-radius:10px;box-shadow:0 3.75px 1.25px -2.5px rgba(0,0,0,.2),0 2.5px 2.5px 0 rgba(0,0,0,.14),0 1.25px 6.25px 0 rgba(0,0,0,.12)"></div>
<span class="t" style="letter-spacing:0.115px;left:1270.80px;top:176.00px;font-size:20px;color:#212121;">Office plan</span>
<svg class="i" viewBox="0 0 24 24" style="left:1864.70px;top:178.50px;width:26px;height:26px;fill:#1e1e1e;"><path d="M7 14H5v5h5v-2H7v-3zm-2-4h2V7h3V5H5v5zm12 7h-3v2h5v-5h-2v3zM14 5v2h3v3h2V5h-5z"/></svg>
<svg class="i" style="left:1256px;top:155px;width:651px;height:913px" viewBox="1256 155 651 913"><rect x="1813.3" y="270.0" width="19.5" height="134.0" rx="0" fill="#bdbdbd" stroke="#777" stroke-width="0.8" /><g transform="translate(1650.7 278.4) rotate(180) scale(1.0)"><path d="M-8.6 2.5 Q-10.4 11.2 0 11.2 Q10.4 11.2 8.6 2.5 Q7 7.6 0 7.6 Q-7 7.6 -8.6 2.5Z" fill="#f0f0f0" stroke="#2a2a2a" stroke-width="0.9"/><path d="M-6.4 -10.6 Q0 -12.4 6.4 -10.6 Q8 -4 7 3 Q4 7.4 0 7.4 Q-4 7.4 -7 3 Q-8 -4 -6.4 -10.6Z" fill="#bdbdbd" stroke="#3a3a3a" stroke-width="0.8"/><rect x="-9.5" y="-4.2" width="2.6" height="8.6" rx="0.8" fill="#3d3d3d"/><rect x="6.9" y="-4.2" width="2.6" height="8.6" rx="0.8" fill="#3d3d3d"/><rect x="-7.6" y="-10.6" width="1.5" height="2.2" fill="#333"/><rect x="6.1" y="-10.6" width="1.5" height="2.2" fill="#333"/><path d="M-5.6 7 Q-3 1.5 -2.6 -2 M5.6 7 Q3 1.5 2.6 -2" fill="none" stroke="#444" stroke-width="0.7"/><rect x="-2.6" y="4.2" width="5.2" height="2.4" fill="#333"/></g><g transform="translate(1650.7 354.2) rotate(0) scale(1.0)"><path d="M-8.6 2.5 Q-10.4 11.2 0 11.2 Q10.4 11.2 8.6 2.5 Q7 7.6 0 7.6 Q-7 7.6 -8.6 2.5Z" fill="#f0f0f0" stroke="#2a2a2a" stroke-width="0.9"/><path d="M-6.4 -10.6 Q0 -12.4 6.4 -10.6 Q8 -4 7 3 Q4 7.4 0 7.4 Q-4 7.4 -7 3 Q-8 -4 -6.4 -10.6Z" fill="#bdbdbd" stroke="#3a3a3a" stroke-width="0.8"/><rect x="-9.5" y="-4.2" width="2.6" height="8.6" rx="0.8" fill="#3d3d3d"/><rect x="6.9" y="-4.2" width="2.6" height="8.6" rx="0.8" fill="#3d3d3d"/><rect x="-7.6" y="-10.6" width="1.5" height="2.2" fill="#333"/><rect x="6.1" y="-10.6" width="1.5" height="2.2" fill="#333"/><path d="M-5.6 7 Q-3 1.5 -2.6 -2 M5.6 7 Q3 1.5 2.6 -2" fill="none" stroke="#444" stroke-width="0.7"/><rect x="-2.6" y="4.2" width="5.2" height="2.4" fill="#333"/></g><g transform="translate(1689.6 278.4) rotate(180) scale(1.0)"><path d="M-8.6 2.5 Q-10.4 11.2 0 11.2 Q10.4 11.2 8.6 2.5 Q7 7.6 0 7.6 Q-7 7.6 -8.6 2.5Z" fill="#f0f0f0" stroke="#2a2a2a" stroke-width="0.9"/><path d="M-6.4 -10.6 Q0 -12.4 6.4 -10.6 Q8 -4 7 3 Q4 7.4 0 7.4 Q-4 7.4 -7 3 Q-8 -4 -6.4 -10.6Z" fill="#bdbdbd" stroke="#3a3a3a" stroke-width="0.8"/><rect x="-9.5" y="-4.2" width="2.6" height="8.6" rx="0.8" fill="#3d3d3d"/><rect x="6.9" y="-4.2" width="2.6" height="8.6" rx="0.8" fill="#3d3d3d"/><rect x="-7.6" y="-10.6" width="1.5" height="2.2" fill="#333"/><rect x="6.1" y="-10.6" width="1.5" height="2.2" fill="#333"/><path d="M-5.6 7 Q-3 1.5 -2.6 -2 M5.6 7 Q3 1.5 2.6 -2" fill="none" stroke="#444" stroke-width="0.7"/><rect x="-2.6" y="4.2" width="5.2" height="2.4" fill="#333"/></g><g transform="translate(1689.6 354.2) rotate(0) scale(1.0)"><path d="M-8.6 2.5 Q-10.4 11.2 0 11.2 Q10.4 11.2 8.6 2.5 Q7 7.6 0 7.6 Q-7 7.6 -8.6 2.5Z" fill="#f0f0f0" stroke="#2a2a2a" stroke-width="0.9"/><path d="M-6.4 -10.6 Q0 -12.4 6.4 -10.6 Q8 -4 7 3 Q4 7.4 0 7.4 Q-4 7.4 -7 3 Q-8 -4 -6.4 -10.6Z" fill="#bdbdbd" stroke="#3a3a3a" stroke-width="0.8"/><rect x="-9.5" y="-4.2" width="2.6" height="8.6" rx="0.8" fill="#3d3d3d"/><rect x="6.9" y="-4.2" width="2.6" height="8.6" rx="0.8" fill="#3d3d3d"/><rect x="-7.6" y="-10.6" width="1.5" height="2.2" fill="#333"/><rect x="6.1" y="-10.6" width="1.5" height="2.2" fill="#333"/><path d="M-5.6 7 Q-3 1.5 -2.6 -2 M5.6 7 Q3 1.5 2.6 -2" fill="none" stroke="#444" stroke-width="0.7"/><rect x="-2.6" y="4.2" width="5.2" height="2.4" fill="#333"/></g><g transform="translate(1728.5 278.4) rotate(180) scale(1.0)"><path d="M-8.6 2.5 Q-10.4 11.2 0 11.2 Q10.4 11.2 8.6 2.5 Q7 7.6 0 7.6 Q-7 7.6 -8.6 2.5Z" fill="#f0f0f0" stroke="#2a2a2a" stroke-width="0.9"/><path d="M-6.4 -10.6 Q0 -12.4 6.4 -10.6 Q8 -4 7 3 Q4 7.4 0 7.4 Q-4 7.4 -7 3 Q-8 -4 -6.4 -10.6Z" fill="#bdbdbd" stroke="#3a3a3a" stroke-width="0.8"/><rect x="-9.5" y="-4.2" width="2.6" height="8.6" rx="0.8" fill="#3d3d3d"/><rect x="6.9" y="-4.2" width="2.6" height="8.6" rx="0.8" fill="#3d3d3d"/><rect x="-7.6" y="-10.6" width="1.5" height="2.2" fill="#333"/><rect x="6.1" y="-10.6" width="1.5" height="2.2" fill="#333"/><path d="M-5.6 7 Q-3 1.5 -2.6 -2 M5.6 7 Q3 1.5 2.6 -2" fill="none" stroke="#444" stroke-width="0.7"/><rect x="-2.6" y="4.2" width="5.2" height="2.4" fill="#333"/></g><g transform="translate(1728.5 354.2) rotate(0) scale(1.0)"><path d="M-8.6 2.5 Q-10.4 11.2 0 11.2 Q10.4 11.2 8.6 2.5 Q7 7.6 0 7.6 Q-7 7.6 -8.6 2.5Z" fill="#f0f0f0" stroke="#2a2a2a" stroke-width="0.9"/><path d="M-6.4 -10.6 Q0 -12.4 6.4 -10.6 Q8 -4 7 3 Q4 7.4 0 7.4 Q-4 7.4 -7 3 Q-8 -4 -6.4 -10.6Z" fill="#bdbdbd" stroke="#3a3a3a" stroke-width="0.8"/><rect x="-9.5" y="-4.2" width="2.6" height="8.6" rx="0.8" fill="#3d3d3d"/><rect x="6.9" y="-4.2" width="2.6" height="8.6" rx="0.8" fill="#3d3d3d"/><rect x="-7.6" y="-10.6" width="1.5" height="2.2" fill="#333"/><rect x="6.1" y="-10.6" width="1.5" height="2.2" fill="#333"/><path d="M-5.6 7 Q-3 1.5 -2.6 -2 M5.6 7 Q3 1.5 2.6 -2" fill="none" stroke="#444" stroke-width="0.7"/><rect x="-2.6" y="4.2" width="5.2" height="2.4" fill="#333"/></g><g transform="translate(1614.2 315.2) rotate(90) scale(1.0)"><path d="M-8.6 2.5 Q-10.4 11.2 0 11.2 Q10.4 11.2 8.6 2.5 Q7 7.6 0 7.6 Q-7 7.6 -8.6 2.5Z" fill="#f0f0f0" stroke="#2a2a2a" stroke-width="0.9"/><path d="M-6.4 -10.6 Q0 -12.4 6.4 -10.6 Q8 -4 7 3 Q4 7.4 0 7.4 Q-4 7.4 -7 3 Q-8 -4 -6.4 -10.6Z" fill="#bdbdbd" stroke="#3a3a3a" stroke-width="0.8"/><rect x="-9.5" y="-4.2" width="2.6" height="8.6" rx="0.8" fill="#3d3d3d"/><rect x="6.9" y="-4.2" width="2.6" height="8.6" rx="0.8" fill="#3d3d3d"/><rect x="-7.6" y="-10.6" width="1.5" height="2.2" fill="#333"/><rect x="6.1" y="-10.6" width="1.5" height="2.2" fill="#333"/><path d="M-5.6 7 Q-3 1.5 -2.6 -2 M5.6 7 Q3 1.5 2.6 -2" fill="none" stroke="#444" stroke-width="0.7"/><rect x="-2.6" y="4.2" width="5.2" height="2.4" fill="#333"/></g><g transform="translate(1765.1 315.2) rotate(-90) scale(1.0)"><path d="M-8.6 2.5 Q-10.4 11.2 0 11.2 Q10.4 11.2 8.6 2.5 Q7 7.6 0 7.6 Q-7 7.6 -8.6 2.5Z" fill="#f0f0f0" stroke="#2a2a2a" stroke-width="0.9"/><path d="M-6.4 -10.6 Q0 -12.4 6.4 -10.6 Q8 -4 7 3 Q4 7.4 0 7.4 Q-4 7.4 -7 3 Q-8 -4 -6.4 -10.6Z" fill="#bdbdbd" stroke="#3a3a3a" stroke-width="0.8"/><rect x="-9.5" y="-4.2" width="2.6" height="8.6" rx="0.8" fill="#3d3d3d"/><rect x="6.9" y="-4.2" width="2.6" height="8.6" rx="0.8" fill="#3d3d3d"/><rect x="-7.6" y="-10.6" width="1.5" height="2.2" fill="#333"/><rect x="6.1" y="-10.6" width="1.5" height="2.2" fill="#333"/><path d="M-5.6 7 Q-3 1.5 -2.6 -2 M5.6 7 Q3 1.5 2.6 -2" fill="none" stroke="#444" stroke-width="0.7"/><rect x="-2.6" y="4.2" width="5.2" height="2.4" fill="#333"/></g><rect x="1617.0" y="282.6" width="146.7" height="65.2" rx="14" fill="#ececec" stroke="#555" stroke-width="0.9" /><g transform="translate(1814.3 250)"><ellipse rx="14" ry="1.7" transform="rotate(6.0)" fill="#7d7d7d" stroke="#2e2e2e" stroke-width="0.55"/><ellipse rx="14" ry="1.7" transform="rotate(28.5)" fill="#7d7d7d" stroke="#2e2e2e" stroke-width="0.55"/><ellipse rx="14" ry="1.7" transform="rotate(51.0)" fill="#7d7d7d" stroke="#2e2e2e" stroke-width="0.55"/><ellipse rx="14" ry="1.7" transform="rotate(73.5)" fill="#7d7d7d" stroke="#2e2e2e" stroke-width="0.55"/><ellipse rx="14" ry="1.7" transform="rotate(96.0)" fill="#7d7d7d" stroke="#2e2e2e" stroke-width="0.55"/><ellipse rx="14" ry="1.7" transform="rotate(118.5)" fill="#7d7d7d" stroke="#2e2e2e" stroke-width="0.55"/><ellipse rx="14" ry="1.7" transform="rotate(141.0)" fill="#7d7d7d" stroke="#2e2e2e" stroke-width="0.55"/><ellipse rx="14" ry="1.7" transform="rotate(163.5)" fill="#7d7d7d" stroke="#2e2e2e" stroke-width="0.55"/><circle r="1.4" fill="#222"/></g><path d="M1543.5 245 L1553.5 245 L1558.5 254 M1558.5 263.5 L1553.5 272.5 L1543.5 272.5 M1553.5 245 L1553.5 272.5" fill="none" stroke="#777" stroke-width="0.8" /><path d="M1543.5 289 L1553.5 289 L1558.5 298 M1558.5 307.5 L1553.5 316.5 L1543.5 316.5 M1553.5 289 L1553.5 316.5" fill="none" stroke="#777" stroke-width="0.8" /><path d="M1543.5 332.5 L1553.5 332.5 L1558.5 341.5 M1558.5 351.0 L1553.5 360.0 L1543.5 360.0 M1553.5 332.5 L1553.5 360.0" fill="none" stroke="#777" stroke-width="0.8" /><g transform="translate(1333.9 285.7)"><rect x="5" y="0.8" width="58" height="8" rx="2" fill="#fff" stroke="#000" stroke-width="1.5"/><rect x="0.8" y="7" width="66.4" height="22.8" rx="3" fill="#fff" stroke="#000" stroke-width="1.5"/><line x1="6.2" y1="7" x2="6.2" y2="29.8" stroke="#000" stroke-width="1.3"/><line x1="61.8" y1="7" x2="61.8" y2="29.8" stroke="#000" stroke-width="1.3"/><line x1="34" y1="8" x2="34" y2="29.8" stroke="#000" stroke-width="1.2"/><rect x="11.5" y="5.5" width="19" height="9.5" rx="2.5" fill="#fff" stroke="#000" stroke-width="1.3"/><line x1="14.0" y1="6.6" x2="17.2" y2="14" stroke="#000" stroke-width="1.5"/><line x1="17.4" y1="6.6" x2="20.599999999999998" y2="14" stroke="#000" stroke-width="1.5"/><line x1="20.8" y1="6.6" x2="24.0" y2="14" stroke="#000" stroke-width="1.5"/><line x1="24.2" y1="6.6" x2="27.4" y2="14" stroke="#000" stroke-width="1.5"/><line x1="27.6" y1="6.6" x2="30.8" y2="14" stroke="#000" stroke-width="1.5"/><rect x="37.5" y="5.5" width="19" height="9.5" rx="2.5" fill="#fff" stroke="#000" stroke-width="1.3"/><line x1="40.0" y1="6.6" x2="43.2" y2="14" stroke="#000" stroke-width="1.5"/><line x1="43.4" y1="6.6" x2="46.6" y2="14" stroke="#000" stroke-width="1.5"/><line x1="46.8" y1="6.6" x2="50.0" y2="14" stroke="#000" stroke-width="1.5"/><line x1="50.2" y1="6.6" x2="53.400000000000006" y2="14" stroke="#000" stroke-width="1.5"/><line x1="53.6" y1="6.6" x2="56.800000000000004" y2="14" stroke="#000" stroke-width="1.5"/></g><path d="M1483.5 302.5 L1495.5 302 Q1497 323 1518 327.5 L1517 336 Q1486 331 1483.5 302.5Z" fill="#b9b9b9" stroke="#555" stroke-width="0.9" /><rect x="-5.5" y="-6.5" width="11" height="13" rx="2.5" transform="translate(1508 310.5) rotate(35)" fill="#fff" stroke="#444" stroke-width="0.9"/><rect x="1488.5" y="308.0" width="5.0" height="6.5" rx="0" fill="#888" stroke="#444" stroke-width="0.6" /><g transform="translate(1512.5 330)"><ellipse rx="4.3" ry="1.1" transform="rotate(10)" fill="#333"/><ellipse rx="4.3" ry="1.1" transform="rotate(55)" fill="#333"/><ellipse rx="4.3" ry="1.1" transform="rotate(100)" fill="#333"/><ellipse rx="4.3" ry="1.1" transform="rotate(145)" fill="#333"/></g><rect x="1496.5" y="319.0" width="7.0" height="6.0" rx="0" fill="#ddd" stroke="#444" stroke-width="0.6" transform="rotate(35 1500 322)"/><rect x="1526.5" y="362.5" width="14.5" height="14.5" rx="0" fill="#eee" stroke="#666" stroke-width="0.8" /><circle cx="1534.3" cy="369.3" r="5.6" fill="#aaa" stroke="#666" stroke-width="0.8"/><rect x="1522.8" y="367.3" width="3.2" height="4.4" rx="0" fill="#fff" stroke="#444" stroke-width="0.7" /><line x1="1329" y1="428.2" x2="1367.2" y2="428.2" stroke="#111" stroke-width="1.9" stroke-linecap="butt"/><rect x="1353.0" y="424.8" width="13.6" height="2.5" rx="0" fill="#b5b5b5" stroke="#999" stroke-width="0.4" /><path d="M1353 426.2 A14 14 0 0 1 1366.8 412.4" fill="none" stroke="#777" stroke-width="0.8" /><line x1="1329" y1="447.5" x2="1367.2" y2="447.5" stroke="#111" stroke-width="1.9" stroke-linecap="butt"/><rect x="1353.0" y="444.1" width="13.6" height="2.5" rx="0" fill="#b5b5b5" stroke="#999" stroke-width="0.4" /><path d="M1353 445.5 A14 14 0 0 1 1366.8 431.7" fill="none" stroke="#777" stroke-width="0.8" /><line x1="1329" y1="466.7" x2="1367.2" y2="466.7" stroke="#111" stroke-width="1.9" stroke-linecap="butt"/><rect x="1353.0" y="463.3" width="13.6" height="2.5" rx="0" fill="#b5b5b5" stroke="#999" stroke-width="0.4" /><path d="M1353 464.7 A14 14 0 0 1 1366.8 450.9" fill="none" stroke="#777" stroke-width="0.8" /><line x1="1329" y1="492.6" x2="1367.2" y2="492.6" stroke="#111" stroke-width="1.9" stroke-linecap="butt"/><rect x="1353.0" y="489.2" width="13.6" height="2.5" rx="0" fill="#b5b5b5" stroke="#999" stroke-width="0.4" /><path d="M1353 490.6 A14 14 0 0 1 1366.8 476.8" fill="none" stroke="#777" stroke-width="0.8" /><line x1="1329" y1="511.9" x2="1367.2" y2="511.9" stroke="#111" stroke-width="1.9" stroke-linecap="butt"/><rect x="1353.0" y="508.5" width="13.6" height="2.5" rx="0" fill="#b5b5b5" stroke="#999" stroke-width="0.4" /><path d="M1353 509.9 A14 14 0 0 1 1366.8 496.09999999999997" fill="none" stroke="#777" stroke-width="0.8" /><line x1="1329" y1="531.1" x2="1367.2" y2="531.1" stroke="#111" stroke-width="1.9" stroke-linecap="butt"/><rect x="1353.0" y="527.7" width="13.6" height="2.5" rx="0" fill="#b5b5b5" stroke="#999" stroke-width="0.4" /><path d="M1353 529.1 A14 14 0 0 1 1366.8 515.3000000000001" fill="none" stroke="#777" stroke-width="0.8" /><rect x="1344.2" y="429.8" width="6.0" height="3.0" rx="1.2" fill="#fff" stroke="#444" stroke-width="0.8" /><rect x="1344.2" y="449.1" width="6.0" height="3.0" rx="1.2" fill="#fff" stroke="#444" stroke-width="0.8" /><rect x="1344.2" y="475.0" width="6.0" height="3.0" rx="1.2" fill="#fff" stroke="#444" stroke-width="0.8" /><rect x="1344.2" y="494.2" width="6.0" height="3.0" rx="1.2" fill="#fff" stroke="#444" stroke-width="0.8" /><rect x="1344.2" y="513.5" width="6.0" height="3.0" rx="1.2" fill="#fff" stroke="#444" stroke-width="0.8" /><line x1="1367.2" y1="407" x2="1367.2" y2="531" stroke="#c4c4c4" stroke-width="0.6" stroke-linecap="butt"/><rect x="1400.6" y="475.6" width="28.3" height="16.4" rx="0" fill="#e9e9e9" stroke="#555" stroke-width="0.8" /><ellipse cx="1416.3" cy="483.8" rx="7.6" ry="5.4" fill="#fff" stroke="#333" stroke-width="0.9"/><line x1="1416.3" y1="479" x2="1416.3" y2="484" stroke="#333" stroke-width="0.9"/><rect x="1400.6" y="408.0" width="28.3" height="15.0" rx="0" fill="#e9e9e9" stroke="#555" stroke-width="0.8" /><g transform="translate(1452.4 427.8)"><ellipse rx="13.5" ry="1.7" transform="rotate(6.0)" fill="#7d7d7d" stroke="#2e2e2e" stroke-width="0.55"/><ellipse rx="13.5" ry="1.7" transform="rotate(28.5)" fill="#7d7d7d" stroke="#2e2e2e" stroke-width="0.55"/><ellipse rx="13.5" ry="1.7" transform="rotate(51.0)" fill="#7d7d7d" stroke="#2e2e2e" stroke-width="0.55"/><ellipse rx="13.5" ry="1.7" transform="rotate(73.5)" fill="#7d7d7d" stroke="#2e2e2e" stroke-width="0.55"/><ellipse rx="13.5" ry="1.7" transform="rotate(96.0)" fill="#7d7d7d" stroke="#2e2e2e" stroke-width="0.55"/><ellipse rx="13.5" ry="1.7" transform="rotate(118.5)" fill="#7d7d7d" stroke="#2e2e2e" stroke-width="0.55"/><ellipse rx="13.5" ry="1.7" transform="rotate(141.0)" fill="#7d7d7d" stroke="#2e2e2e" stroke-width="0.55"/><ellipse rx="13.5" ry="1.7" transform="rotate(163.5)" fill="#7d7d7d" stroke="#2e2e2e" stroke-width="0.55"/><circle r="1.4" fill="#222"/></g><ellipse cx="1585.6" cy="499.6" rx="27.3" ry="15" fill="#fff" stroke="#000" stroke-width="1.4"/><line x1="1570.1" y1="490.1" x2="1562.1" y2="484.40000000000003" stroke="#000" stroke-width="1.3" stroke-linecap="butt"/><line x1="1601.1" y1="490.1" x2="1609.1" y2="484.40000000000003" stroke="#000" stroke-width="1.3" stroke-linecap="butt"/><line x1="1570.1" y1="509.1" x2="1562.1" y2="514.8000000000001" stroke="#000" stroke-width="1.3" stroke-linecap="butt"/><line x1="1601.1" y1="509.1" x2="1609.1" y2="514.8000000000001" stroke="#000" stroke-width="1.3" stroke-linecap="butt"/><g transform="translate(1552.2 522.2) translate(0 30.6) scale(1 -1)"><rect x="5" y="0.8" width="58" height="8" rx="2" fill="#fff" stroke="#000" stroke-width="1.5"/><rect x="0.8" y="7" width="66.4" height="22.8" rx="3" fill="#fff" stroke="#000" stroke-width="1.5"/><line x1="6.2" y1="7" x2="6.2" y2="29.8" stroke="#000" stroke-width="1.3"/><line x1="61.8" y1="7" x2="61.8" y2="29.8" stroke="#000" stroke-width="1.3"/><line x1="34" y1="8" x2="34" y2="29.8" stroke="#000" stroke-width="1.2"/><rect x="11.5" y="5.5" width="19" height="9.5" rx="2.5" fill="#fff" stroke="#000" stroke-width="1.3"/><line x1="17.2" y1="6.6" x2="14.0" y2="14" stroke="#000" stroke-width="1.5"/><line x1="20.599999999999998" y1="6.6" x2="17.4" y2="14" stroke="#000" stroke-width="1.5"/><line x1="24.0" y1="6.6" x2="20.8" y2="14" stroke="#000" stroke-width="1.5"/><line x1="27.4" y1="6.6" x2="24.2" y2="14" stroke="#000" stroke-width="1.5"/><line x1="30.8" y1="6.6" x2="27.6" y2="14" stroke="#000" stroke-width="1.5"/><rect x="37.5" y="5.5" width="19" height="9.5" rx="2.5" fill="#fff" stroke="#000" stroke-width="1.3"/><line x1="43.2" y1="6.6" x2="40.0" y2="14" stroke="#000" stroke-width="1.5"/><line x1="46.6" y1="6.6" x2="43.4" y2="14" stroke="#000" stroke-width="1.5"/><line x1="50.0" y1="6.6" x2="46.8" y2="14" stroke="#000" stroke-width="1.5"/><line x1="53.400000000000006" y1="6.6" x2="50.2" y2="14" stroke="#000" stroke-width="1.5"/><line x1="56.800000000000004" y1="6.6" x2="53.6" y2="14" stroke="#000" stroke-width="1.5"/></g><rect x="1348.3" y="558.9" width="28.2" height="20.7" rx="0" fill="#c2c2c2" stroke="#666" stroke-width="1" /><rect x="1376.5" y="558.9" width="26.1" height="65.1" rx="0" fill="#c2c2c2" stroke="#666" stroke-width="1" /><g transform="translate(1376.5 595.7)"><rect x="2.4" y="-7.2" width="5.2" height="14.8" fill="#f4f4f4" stroke="#555" stroke-width="0.7"/><line x1="2.4" y1="-1" x2="7.6" y2="-1" stroke="#555" stroke-width="0.9"/><line x1="2.4" y1="2.6" x2="7.6" y2="2.6" stroke="#555" stroke-width="0.9"/><rect x="9.4" y="-7.4" width="14" height="15.4" rx="3" fill="#adadad" stroke="#555" stroke-width="0.8"/><path d="M11 -5 L15 -6.4 L15 7 L11 5.6Z" fill="#e4e4e4" stroke="#666" stroke-width="0.5"/><rect x="15.8" y="-4.6" width="5.6" height="9.6" rx="2" fill="#c9c9c9" stroke="#666" stroke-width="0.6"/></g><g transform="translate(1362.6 595.7) rotate(90) scale(1.0)"><path d="M-8.6 2.5 Q-10.4 11.2 0 11.2 Q10.4 11.2 8.6 2.5 Q7 7.6 0 7.6 Q-7 7.6 -8.6 2.5Z" fill="#f0f0f0" stroke="#2a2a2a" stroke-width="0.9"/><path d="M-6.4 -10.6 Q0 -12.4 6.4 -10.6 Q8 -4 7 3 Q4 7.4 0 7.4 Q-4 7.4 -7 3 Q-8 -4 -6.4 -10.6Z" fill="#bdbdbd" stroke="#3a3a3a" stroke-width="0.8"/><rect x="-9.5" y="-4.2" width="2.6" height="8.6" rx="0.8" fill="#3d3d3d"/><rect x="6.9" y="-4.2" width="2.6" height="8.6" rx="0.8" fill="#3d3d3d"/><rect x="-7.6" y="-10.6" width="1.5" height="2.2" fill="#333"/><rect x="6.1" y="-10.6" width="1.5" height="2.2" fill="#333"/><path d="M-5.6 7 Q-3 1.5 -2.6 -2 M5.6 7 Q3 1.5 2.6 -2" fill="none" stroke="#444" stroke-width="0.7"/><rect x="-2.6" y="4.2" width="5.2" height="2.4" fill="#333"/></g><g transform="translate(1393 615)"><ellipse rx="4.3" ry="1.1" transform="rotate(10)" fill="#333"/><ellipse rx="4.3" ry="1.1" transform="rotate(55)" fill="#333"/><ellipse rx="4.3" ry="1.1" transform="rotate(100)" fill="#333"/><ellipse rx="4.3" ry="1.1" transform="rotate(145)" fill="#333"/></g><rect x="1347.8" y="779.3" width="28.7" height="20.3" rx="0" fill="#c2c2c2" stroke="#666" stroke-width="1" /><rect x="1376.5" y="734.3" width="26.5" height="65.3" rx="0" fill="#c2c2c2" stroke="#666" stroke-width="1" /><g transform="translate(1376.5 764)"><rect x="2.4" y="-7.2" width="5.2" height="14.8" fill="#f4f4f4" stroke="#555" stroke-width="0.7"/><line x1="2.4" y1="-1" x2="7.6" y2="-1" stroke="#555" stroke-width="0.9"/><line x1="2.4" y1="2.6" x2="7.6" y2="2.6" stroke="#555" stroke-width="0.9"/><rect x="9.4" y="-7.4" width="14" height="15.4" rx="3" fill="#adadad" stroke="#555" stroke-width="0.8"/><path d="M11 -5 L15 -6.4 L15 7 L11 5.6Z" fill="#e4e4e4" stroke="#666" stroke-width="0.5"/><rect x="15.8" y="-4.6" width="5.6" height="9.6" rx="2" fill="#c9c9c9" stroke="#666" stroke-width="0.6"/></g><g transform="translate(1362.6 764) rotate(90) scale(1.0)"><path d="M-8.6 2.5 Q-10.4 11.2 0 11.2 Q10.4 11.2 8.6 2.5 Q7 7.6 0 7.6 Q-7 7.6 -8.6 2.5Z" fill="#f0f0f0" stroke="#2a2a2a" stroke-width="0.9"/><path d="M-6.4 -10.6 Q0 -12.4 6.4 -10.6 Q8 -4 7 3 Q4 7.4 0 7.4 Q-4 7.4 -7 3 Q-8 -4 -6.4 -10.6Z" fill="#bdbdbd" stroke="#3a3a3a" stroke-width="0.8"/><rect x="-9.5" y="-4.2" width="2.6" height="8.6" rx="0.8" fill="#3d3d3d"/><rect x="6.9" y="-4.2" width="2.6" height="8.6" rx="0.8" fill="#3d3d3d"/><rect x="-7.6" y="-10.6" width="1.5" height="2.2" fill="#333"/><rect x="6.1" y="-10.6" width="1.5" height="2.2" fill="#333"/><path d="M-5.6 7 Q-3 1.5 -2.6 -2 M5.6 7 Q3 1.5 2.6 -2" fill="none" stroke="#444" stroke-width="0.7"/><rect x="-2.6" y="4.2" width="5.2" height="2.4" fill="#333"/></g><g transform="translate(1393 741.5)"><ellipse rx="4.3" ry="1.1" transform="rotate(10)" fill="#333"/><ellipse rx="4.3" ry="1.1" transform="rotate(55)" fill="#333"/><ellipse rx="4.3" ry="1.1" transform="rotate(100)" fill="#333"/><ellipse rx="4.3" ry="1.1" transform="rotate(145)" fill="#333"/></g><rect x="1376.5" y="960.0" width="0.1" height="0.1" rx="0" fill="#c2c2c2" stroke="#666" stroke-width="1" /><rect x="1376.5" y="874.8" width="26.5" height="97.2" rx="0" fill="#c2c2c2" stroke="#666" stroke-width="1" /><g transform="translate(1376.5 904)"><rect x="2.4" y="-7.2" width="5.2" height="14.8" fill="#f4f4f4" stroke="#555" stroke-width="0.7"/><line x1="2.4" y1="-1" x2="7.6" y2="-1" stroke="#555" stroke-width="0.9"/><line x1="2.4" y1="2.6" x2="7.6" y2="2.6" stroke="#555" stroke-width="0.9"/><rect x="9.4" y="-7.4" width="14" height="15.4" rx="3" fill="#adadad" stroke="#555" stroke-width="0.8"/><path d="M11 -5 L15 -6.4 L15 7 L11 5.6Z" fill="#e4e4e4" stroke="#666" stroke-width="0.5"/><rect x="15.8" y="-4.6" width="5.6" height="9.6" rx="2" fill="#c9c9c9" stroke="#666" stroke-width="0.6"/></g><g transform="translate(1362.6 904) rotate(90) scale(1.0)"><path d="M-8.6 2.5 Q-10.4 11.2 0 11.2 Q10.4 11.2 8.6 2.5 Q7 7.6 0 7.6 Q-7 7.6 -8.6 2.5Z" fill="#f0f0f0" stroke="#2a2a2a" stroke-width="0.9"/><path d="M-6.4 -10.6 Q0 -12.4 6.4 -10.6 Q8 -4 7 3 Q4 7.4 0 7.4 Q-4 7.4 -7 3 Q-8 -4 -6.4 -10.6Z" fill="#bdbdbd" stroke="#3a3a3a" stroke-width="0.8"/><rect x="-9.5" y="-4.2" width="2.6" height="8.6" rx="0.8" fill="#3d3d3d"/><rect x="6.9" y="-4.2" width="2.6" height="8.6" rx="0.8" fill="#3d3d3d"/><rect x="-7.6" y="-10.6" width="1.5" height="2.2" fill="#333"/><rect x="6.1" y="-10.6" width="1.5" height="2.2" fill="#333"/><path d="M-5.6 7 Q-3 1.5 -2.6 -2 M5.6 7 Q3 1.5 2.6 -2" fill="none" stroke="#444" stroke-width="0.7"/><rect x="-2.6" y="4.2" width="5.2" height="2.4" fill="#333"/></g><g transform="translate(1393 882.5)"><ellipse rx="4.3" ry="1.1" transform="rotate(10)" fill="#333"/><ellipse rx="4.3" ry="1.1" transform="rotate(55)" fill="#333"/><ellipse rx="4.3" ry="1.1" transform="rotate(100)" fill="#333"/><ellipse rx="4.3" ry="1.1" transform="rotate(145)" fill="#333"/></g><rect x="1785.6" y="501.3" width="28.7" height="20.0" rx="0" fill="#c2c2c2" stroke="#666" stroke-width="1" /><rect x="1759.3" y="456.5" width="26.3" height="64.8" rx="0" fill="#c2c2c2" stroke="#666" stroke-width="1" /><g transform="translate(1759.3 484.3) translate(26.299999999999955 0) scale(-1 1)"><rect x="2.4" y="-7.2" width="5.2" height="14.8" fill="#f4f4f4" stroke="#555" stroke-width="0.7"/><line x1="2.4" y1="-1" x2="7.6" y2="-1" stroke="#555" stroke-width="0.9"/><line x1="2.4" y1="2.6" x2="7.6" y2="2.6" stroke="#555" stroke-width="0.9"/><rect x="9.4" y="-7.4" width="14" height="15.4" rx="3" fill="#adadad" stroke="#555" stroke-width="0.8"/><path d="M11 -5 L15 -6.4 L15 7 L11 5.6Z" fill="#e4e4e4" stroke="#666" stroke-width="0.5"/><rect x="15.8" y="-4.6" width="5.6" height="9.6" rx="2" fill="#c9c9c9" stroke="#666" stroke-width="0.6"/></g><g transform="translate(1799.6 484.3) rotate(-90) scale(1.0)"><path d="M-8.6 2.5 Q-10.4 11.2 0 11.2 Q10.4 11.2 8.6 2.5 Q7 7.6 0 7.6 Q-7 7.6 -8.6 2.5Z" fill="#f0f0f0" stroke="#2a2a2a" stroke-width="0.9"/><path d="M-6.4 -10.6 Q0 -12.4 6.4 -10.6 Q8 -4 7 3 Q4 7.4 0 7.4 Q-4 7.4 -7 3 Q-8 -4 -6.4 -10.6Z" fill="#bdbdbd" stroke="#3a3a3a" stroke-width="0.8"/><rect x="-9.5" y="-4.2" width="2.6" height="8.6" rx="0.8" fill="#3d3d3d"/><rect x="6.9" y="-4.2" width="2.6" height="8.6" rx="0.8" fill="#3d3d3d"/><rect x="-7.6" y="-10.6" width="1.5" height="2.2" fill="#333"/><rect x="6.1" y="-10.6" width="1.5" height="2.2" fill="#333"/><path d="M-5.6 7 Q-3 1.5 -2.6 -2 M5.6 7 Q3 1.5 2.6 -2" fill="none" stroke="#444" stroke-width="0.7"/><rect x="-2.6" y="4.2" width="5.2" height="2.4" fill="#333"/></g><g transform="translate(1768.5 462)"><ellipse rx="4.3" ry="1.1" transform="rotate(10)" fill="#333"/><ellipse rx="4.3" ry="1.1" transform="rotate(55)" fill="#333"/><ellipse rx="4.3" ry="1.1" transform="rotate(100)" fill="#333"/><ellipse rx="4.3" ry="1.1" transform="rotate(145)" fill="#333"/></g><rect x="1785.2" y="563.7" width="29.1" height="20.2" rx="0" fill="#c2c2c2" stroke="#666" stroke-width="1" /><rect x="1759.3" y="563.7" width="25.9" height="65.2" rx="0" fill="#c2c2c2" stroke="#666" stroke-width="1" /><g transform="translate(1759.3 598.3) translate(25.90000000000009 0) scale(-1 1)"><rect x="2.4" y="-7.2" width="5.2" height="14.8" fill="#f4f4f4" stroke="#555" stroke-width="0.7"/><line x1="2.4" y1="-1" x2="7.6" y2="-1" stroke="#555" stroke-width="0.9"/><line x1="2.4" y1="2.6" x2="7.6" y2="2.6" stroke="#555" stroke-width="0.9"/><rect x="9.4" y="-7.4" width="14" height="15.4" rx="3" fill="#adadad" stroke="#555" stroke-width="0.8"/><path d="M11 -5 L15 -6.4 L15 7 L11 5.6Z" fill="#e4e4e4" stroke="#666" stroke-width="0.5"/><rect x="15.8" y="-4.6" width="5.6" height="9.6" rx="2" fill="#c9c9c9" stroke="#666" stroke-width="0.6"/></g><g transform="translate(1800 598.3) rotate(-90) scale(1.0)"><path d="M-8.6 2.5 Q-10.4 11.2 0 11.2 Q10.4 11.2 8.6 2.5 Q7 7.6 0 7.6 Q-7 7.6 -8.6 2.5Z" fill="#f0f0f0" stroke="#2a2a2a" stroke-width="0.9"/><path d="M-6.4 -10.6 Q0 -12.4 6.4 -10.6 Q8 -4 7 3 Q4 7.4 0 7.4 Q-4 7.4 -7 3 Q-8 -4 -6.4 -10.6Z" fill="#bdbdbd" stroke="#3a3a3a" stroke-width="0.8"/><rect x="-9.5" y="-4.2" width="2.6" height="8.6" rx="0.8" fill="#3d3d3d"/><rect x="6.9" y="-4.2" width="2.6" height="8.6" rx="0.8" fill="#3d3d3d"/><rect x="-7.6" y="-10.6" width="1.5" height="2.2" fill="#333"/><rect x="6.1" y="-10.6" width="1.5" height="2.2" fill="#333"/><path d="M-5.6 7 Q-3 1.5 -2.6 -2 M5.6 7 Q3 1.5 2.6 -2" fill="none" stroke="#444" stroke-width="0.7"/><rect x="-2.6" y="4.2" width="5.2" height="2.4" fill="#333"/></g><g transform="translate(1768 622)"><ellipse rx="4.3" ry="1.1" transform="rotate(10)" fill="#333"/><ellipse rx="4.3" ry="1.1" transform="rotate(55)" fill="#333"/><ellipse rx="4.3" ry="1.1" transform="rotate(100)" fill="#333"/><ellipse rx="4.3" ry="1.1" transform="rotate(145)" fill="#333"/></g><rect x="1785.6" y="786.3" width="28.7" height="20.4" rx="0" fill="#c2c2c2" stroke="#666" stroke-width="1" /><rect x="1759.6" y="741.9" width="26.0" height="64.8" rx="0" fill="#c2c2c2" stroke="#666" stroke-width="1" /><g transform="translate(1759.6 771.5) translate(26.0 0) scale(-1 1)"><rect x="2.4" y="-7.2" width="5.2" height="14.8" fill="#f4f4f4" stroke="#555" stroke-width="0.7"/><line x1="2.4" y1="-1" x2="7.6" y2="-1" stroke="#555" stroke-width="0.9"/><line x1="2.4" y1="2.6" x2="7.6" y2="2.6" stroke="#555" stroke-width="0.9"/><rect x="9.4" y="-7.4" width="14" height="15.4" rx="3" fill="#adadad" stroke="#555" stroke-width="0.8"/><path d="M11 -5 L15 -6.4 L15 7 L11 5.6Z" fill="#e4e4e4" stroke="#666" stroke-width="0.5"/><rect x="15.8" y="-4.6" width="5.6" height="9.6" rx="2" fill="#c9c9c9" stroke="#666" stroke-width="0.6"/></g><g transform="translate(1799.6 771.5) rotate(-90) scale(1.0)"><path d="M-8.6 2.5 Q-10.4 11.2 0 11.2 Q10.4 11.2 8.6 2.5 Q7 7.6 0 7.6 Q-7 7.6 -8.6 2.5Z" fill="#f0f0f0" stroke="#2a2a2a" stroke-width="0.9"/><path d="M-6.4 -10.6 Q0 -12.4 6.4 -10.6 Q8 -4 7 3 Q4 7.4 0 7.4 Q-4 7.4 -7 3 Q-8 -4 -6.4 -10.6Z" fill="#bdbdbd" stroke="#3a3a3a" stroke-width="0.8"/><rect x="-9.5" y="-4.2" width="2.6" height="8.6" rx="0.8" fill="#3d3d3d"/><rect x="6.9" y="-4.2" width="2.6" height="8.6" rx="0.8" fill="#3d3d3d"/><rect x="-7.6" y="-10.6" width="1.5" height="2.2" fill="#333"/><rect x="6.1" y="-10.6" width="1.5" height="2.2" fill="#333"/><path d="M-5.6 7 Q-3 1.5 -2.6 -2 M5.6 7 Q3 1.5 2.6 -2" fill="none" stroke="#444" stroke-width="0.7"/><rect x="-2.6" y="4.2" width="5.2" height="2.4" fill="#333"/></g><g transform="translate(1768.5 749)"><ellipse rx="4.3" ry="1.1" transform="rotate(10)" fill="#333"/><ellipse rx="4.3" ry="1.1" transform="rotate(55)" fill="#333"/><ellipse rx="4.3" ry="1.1" transform="rotate(100)" fill="#333"/><ellipse rx="4.3" ry="1.1" transform="rotate(145)" fill="#333"/></g><g transform="translate(1814.3 835.4)"><ellipse rx="14" ry="1.7" transform="rotate(6.0)" fill="#7d7d7d" stroke="#2e2e2e" stroke-width="0.55"/><ellipse rx="14" ry="1.7" transform="rotate(28.5)" fill="#7d7d7d" stroke="#2e2e2e" stroke-width="0.55"/><ellipse rx="14" ry="1.7" transform="rotate(51.0)" fill="#7d7d7d" stroke="#2e2e2e" stroke-width="0.55"/><ellipse rx="14" ry="1.7" transform="rotate(73.5)" fill="#7d7d7d" stroke="#2e2e2e" stroke-width="0.55"/><ellipse rx="14" ry="1.7" transform="rotate(96.0)" fill="#7d7d7d" stroke="#2e2e2e" stroke-width="0.55"/><ellipse rx="14" ry="1.7" transform="rotate(118.5)" fill="#7d7d7d" stroke="#2e2e2e" stroke-width="0.55"/><ellipse rx="14" ry="1.7" transform="rotate(141.0)" fill="#7d7d7d" stroke="#2e2e2e" stroke-width="0.55"/><ellipse rx="14" ry="1.7" transform="rotate(163.5)" fill="#7d7d7d" stroke="#2e2e2e" stroke-width="0.55"/><circle r="1.4" fill="#222"/></g><g transform="translate(1765.9 837.9) rotate(180)"><rect x="-5.5" y="-4" width="11" height="7" rx="2" fill="#d0d0d0" stroke="#444" stroke-width="0.7"/><rect x="-6.8" y="2" width="13.6" height="2.8" rx="1.4" fill="#b5b5b5" stroke="#333" stroke-width="0.7"/></g><g transform="translate(1765.9 878.7) rotate(0)"><rect x="-5.5" y="-4" width="11" height="7" rx="2" fill="#d0d0d0" stroke="#444" stroke-width="0.7"/><rect x="-6.8" y="2" width="13.6" height="2.8" rx="1.4" fill="#b5b5b5" stroke="#333" stroke-width="0.7"/></g><g transform="translate(1745.1 858.3) rotate(90)"><rect x="-5.5" y="-4" width="11" height="7" rx="2" fill="#d0d0d0" stroke="#444" stroke-width="0.7"/><rect x="-6.8" y="2" width="13.6" height="2.8" rx="1.4" fill="#b5b5b5" stroke="#333" stroke-width="0.7"/></g><g transform="translate(1786.7 858.3) rotate(-90)"><rect x="-5.5" y="-4" width="11" height="7" rx="2" fill="#d0d0d0" stroke="#444" stroke-width="0.7"/><rect x="-6.8" y="2" width="13.6" height="2.8" rx="1.4" fill="#b5b5b5" stroke="#333" stroke-width="0.7"/></g><rect x="1748.1" y="840.9" width="35.6" height="34.8" rx="7" fill="#f1f1f1" stroke="#555" stroke-width="0.9" /><g transform="translate(1795.2 908.1) rotate(180)"><rect x="-5.5" y="-4" width="11" height="7" rx="2" fill="#d0d0d0" stroke="#444" stroke-width="0.7"/><rect x="-6.8" y="2" width="13.6" height="2.8" rx="1.4" fill="#b5b5b5" stroke="#333" stroke-width="0.7"/></g><g transform="translate(1795.2 948.7) rotate(0)"><rect x="-5.5" y="-4" width="11" height="7" rx="2" fill="#d0d0d0" stroke="#444" stroke-width="0.7"/><rect x="-6.8" y="2" width="13.6" height="2.8" rx="1.4" fill="#b5b5b5" stroke="#333" stroke-width="0.7"/></g><g transform="translate(1774.4 928.4000000000001) rotate(90)"><rect x="-5.5" y="-4" width="11" height="7" rx="2" fill="#d0d0d0" stroke="#444" stroke-width="0.7"/><rect x="-6.8" y="2" width="13.6" height="2.8" rx="1.4" fill="#b5b5b5" stroke="#333" stroke-width="0.7"/></g><g transform="translate(1816 928.4000000000001) rotate(-90)"><rect x="-5.5" y="-4" width="11" height="7" rx="2" fill="#d0d0d0" stroke="#444" stroke-width="0.7"/><rect x="-6.8" y="2" width="13.6" height="2.8" rx="1.4" fill="#b5b5b5" stroke="#333" stroke-width="0.7"/></g><rect x="1777.4" y="911.1" width="35.6" height="34.6" rx="7" fill="#f1f1f1" stroke="#555" stroke-width="0.9" /><rect x="1729.6" y="1016.1" width="62.1" height="18.7" rx="0" fill="#bdbdbd" stroke="#555" stroke-width="0.8" /><rect x="1747.2" y="1017.5" width="22.2" height="16.0" rx="0" fill="#d2d2d2" stroke="#444" stroke-width="0.8" /><rect x="1750.0" y="1019.8" width="16.8" height="11.2" rx="2" fill="#c4c4c4" stroke="#444" stroke-width="0.7" /><rect x="1771.3" y="1017.5" width="20.4" height="17.3" rx="0" fill="#c9c9c9" stroke="#444" stroke-width="0.8" /><rect x="1775.0" y="1023.0" width="13.5" height="8.5" rx="0" fill="#eee" stroke="#444" stroke-width="0.7" /><rect x="1799.6" y="1012.4" width="27.8" height="22.4" rx="0" fill="#e2e2e2" stroke="#555" stroke-width="0.8" /><line x1="1799.6" y1="1014.2" x2="1827.4" y2="1014.2" stroke="#555" stroke-width="1" stroke-linecap="butt"/><rect x="1335.2" y="952.2" width="27.4" height="20.4" rx="0" fill="#dcdcdc" stroke="#555" stroke-width="0.8" /><rect x="1335.2" y="1012.4" width="27.4" height="22.6" rx="0" fill="#dcdcdc" stroke="#555" stroke-width="0.8" /><line x1="1335.2" y1="1014.2" x2="1362.6" y2="1014.2" stroke="#555" stroke-width="1" stroke-linecap="butt"/><rect x="1416.3" y="1006.5" width="13.9" height="24.5" rx="0" fill="#d5d5d5" stroke="#555" stroke-width="0.8" /><rect x="1419.5" y="1010.5" width="7.5" height="16.5" rx="0" fill="#bbb" stroke="#555" stroke-width="0.6" /><rect x="1420.5" y="1001.3" width="5.5" height="5.2" rx="0" fill="#ddd" stroke="#555" stroke-width="0.7" /><g transform="translate(1452.4 1016.7)"><ellipse rx="14" ry="1.7" transform="rotate(6.0)" fill="#7d7d7d" stroke="#2e2e2e" stroke-width="0.55"/><ellipse rx="14" ry="1.7" transform="rotate(28.5)" fill="#7d7d7d" stroke="#2e2e2e" stroke-width="0.55"/><ellipse rx="14" ry="1.7" transform="rotate(51.0)" fill="#7d7d7d" stroke="#2e2e2e" stroke-width="0.55"/><ellipse rx="14" ry="1.7" transform="rotate(73.5)" fill="#7d7d7d" stroke="#2e2e2e" stroke-width="0.55"/><ellipse rx="14" ry="1.7" transform="rotate(96.0)" fill="#7d7d7d" stroke="#2e2e2e" stroke-width="0.55"/><ellipse rx="14" ry="1.7" transform="rotate(118.5)" fill="#7d7d7d" stroke="#2e2e2e" stroke-width="0.55"/><ellipse rx="14" ry="1.7" transform="rotate(141.0)" fill="#7d7d7d" stroke="#2e2e2e" stroke-width="0.55"/><ellipse rx="14" ry="1.7" transform="rotate(163.5)" fill="#7d7d7d" stroke="#2e2e2e" stroke-width="0.55"/><circle r="1.4" fill="#222"/></g><path d="M1586.2 558.5 L1643.6 558.5 L1643.6 576.5 L1621.2 576.5 Q1605.2 576.5 1605.2 592.5 L1605.2 636.0 L1586.2 636.0Z" fill="#dcdcdc" stroke="#777" stroke-width="0.8" /><line x1="1620.2" y1="559.5" x2="1620.2" y2="576.5" stroke="#777" stroke-width="0.7" stroke-linecap="butt"/><line x1="1586.2" y1="593.5" x2="1605.2" y2="593.5" stroke="#777" stroke-width="0.7" stroke-linecap="butt"/><path d="M1588.2 598.5 L1598.8 598.5 L1598.8 634.0" fill="none" stroke="#666" stroke-width="0.9" /><g transform="translate(1605 574.0) rotate(-45)"><rect x="-6.2" y="-3.1" width="12.4" height="6.2" fill="#a9a9a9" stroke="#444" stroke-width="0.8"/><line x1="-7" y1="4.8" x2="7" y2="4.8" stroke="#444" stroke-width="1"/><rect x="-4.6" y="-1.5" width="9.2" height="3" fill="#8a8a8a" stroke="#444" stroke-width="0.5"/></g><path d="M1586.2 636.0 L1528.3 636.0 L1528.3 618.5 L1551.6 618.5 Q1567.6 618.5 1567.6 602.5 L1567.6 558.5 L1586.2 558.5Z" fill="#dcdcdc" stroke="#777" stroke-width="0.8" /><line x1="1552" y1="618.5" x2="1552" y2="635.0" stroke="#777" stroke-width="0.7" stroke-linecap="butt"/><line x1="1567.6" y1="601.5" x2="1586.2" y2="601.5" stroke="#777" stroke-width="0.7" stroke-linecap="butt"/><path d="M1584.2 560.5 L1573.6000000000001 560.5 L1573.6000000000001 595.5 L1584.2 595.5" fill="none" stroke="#666" stroke-width="0.9" /><g transform="translate(1568 620.0) rotate(-45)"><rect x="-6.2" y="-3.1" width="12.4" height="6.2" fill="#a9a9a9" stroke="#444" stroke-width="0.8"/><line x1="-7" y1="4.8" x2="7" y2="4.8" stroke="#444" stroke-width="1"/><rect x="-4.6" y="-1.5" width="9.2" height="3" fill="#8a8a8a" stroke="#444" stroke-width="0.5"/></g><g transform="translate(1545 598.5) rotate(135)"><path d="M9.6 5.8 A11.2 11.2 0 0 1 -9.6 5.8 L-7 4.2 A8.2 8.2 0 0 0 7 4.2 Z" fill="#efefef" stroke="#222" stroke-width="1.1"/><circle r="7.2" fill="#dedede" stroke="#444" stroke-width="0.9"/><rect x="-10" y="-5.6" width="2.3" height="9.4" rx="0.6" fill="#3c3c3c"/><rect x="7.7" y="-5.6" width="2.3" height="9.4" rx="0.6" fill="#3c3c3c"/></g><g transform="translate(1627.2 595.5) rotate(-45)"><path d="M9.6 5.8 A11.2 11.2 0 0 1 -9.6 5.8 L-7 4.2 A8.2 8.2 0 0 0 7 4.2 Z" fill="#efefef" stroke="#222" stroke-width="1.1"/><circle r="7.2" fill="#dedede" stroke="#444" stroke-width="0.9"/><rect x="-10" y="-5.6" width="2.3" height="9.4" rx="0.6" fill="#3c3c3c"/><rect x="7.7" y="-5.6" width="2.3" height="9.4" rx="0.6" fill="#3c3c3c"/></g><path d="M1586.2 636.0 L1643.6 636.0 L1643.6 654.0 L1621.2 654.0 Q1605.2 654.0 1605.2 670.0 L1605.2 713.6 L1586.2 713.6Z" fill="#dcdcdc" stroke="#777" stroke-width="0.8" /><line x1="1620.2" y1="637.0" x2="1620.2" y2="654.0" stroke="#777" stroke-width="0.7" stroke-linecap="butt"/><line x1="1586.2" y1="671.0" x2="1605.2" y2="671.0" stroke="#777" stroke-width="0.7" stroke-linecap="butt"/><path d="M1588.2 676.0 L1598.8 676.0 L1598.8 711.6" fill="none" stroke="#666" stroke-width="0.9" /><g transform="translate(1605 651.5) rotate(-45)"><rect x="-6.2" y="-3.1" width="12.4" height="6.2" fill="#a9a9a9" stroke="#444" stroke-width="0.8"/><line x1="-7" y1="4.8" x2="7" y2="4.8" stroke="#444" stroke-width="1"/><rect x="-4.6" y="-1.5" width="9.2" height="3" fill="#8a8a8a" stroke="#444" stroke-width="0.5"/></g><path d="M1586.2 713.6 L1528.3 713.6 L1528.3 696.1 L1551.6 696.1 Q1567.6 696.1 1567.6 680.1 L1567.6 636.0 L1586.2 636.0Z" fill="#dcdcdc" stroke="#777" stroke-width="0.8" /><line x1="1552" y1="696.1" x2="1552" y2="712.6" stroke="#777" stroke-width="0.7" stroke-linecap="butt"/><line x1="1567.6" y1="679.0" x2="1586.2" y2="679.0" stroke="#777" stroke-width="0.7" stroke-linecap="butt"/><path d="M1584.2 638.0 L1573.6000000000001 638.0 L1573.6000000000001 673.0 L1584.2 673.0" fill="none" stroke="#666" stroke-width="0.9" /><g transform="translate(1568 697.6) rotate(-45)"><rect x="-6.2" y="-3.1" width="12.4" height="6.2" fill="#a9a9a9" stroke="#444" stroke-width="0.8"/><line x1="-7" y1="4.8" x2="7" y2="4.8" stroke="#444" stroke-width="1"/><rect x="-4.6" y="-1.5" width="9.2" height="3" fill="#8a8a8a" stroke="#444" stroke-width="0.5"/></g><g transform="translate(1545 676.0) rotate(135)"><path d="M9.6 5.8 A11.2 11.2 0 0 1 -9.6 5.8 L-7 4.2 A8.2 8.2 0 0 0 7 4.2 Z" fill="#efefef" stroke="#222" stroke-width="1.1"/><circle r="7.2" fill="#dedede" stroke="#444" stroke-width="0.9"/><rect x="-10" y="-5.6" width="2.3" height="9.4" rx="0.6" fill="#3c3c3c"/><rect x="7.7" y="-5.6" width="2.3" height="9.4" rx="0.6" fill="#3c3c3c"/></g><g transform="translate(1627.2 673.0) rotate(-45)"><path d="M9.6 5.8 A11.2 11.2 0 0 1 -9.6 5.8 L-7 4.2 A8.2 8.2 0 0 0 7 4.2 Z" fill="#efefef" stroke="#222" stroke-width="1.1"/><circle r="7.2" fill="#dedede" stroke="#444" stroke-width="0.9"/><rect x="-10" y="-5.6" width="2.3" height="9.4" rx="0.6" fill="#3c3c3c"/><rect x="7.7" y="-5.6" width="2.3" height="9.4" rx="0.6" fill="#3c3c3c"/></g><line x1="1528.7" y1="558.5" x2="1647" y2="558.5" stroke="#111" stroke-width="3.3" stroke-linecap="butt"/><line x1="1645.4" y1="558.5" x2="1645.4" y2="583.0" stroke="#111" stroke-width="3.2" stroke-linecap="butt"/><line x1="1526.6" y1="610.0" x2="1526.6" y2="637.6" stroke="#111" stroke-width="3.2" stroke-linecap="butt"/><line x1="1528.7" y1="636.0" x2="1647" y2="636.0" stroke="#111" stroke-width="3.3" stroke-linecap="butt"/><line x1="1645.4" y1="636.0" x2="1645.4" y2="660.5" stroke="#111" stroke-width="3.2" stroke-linecap="butt"/><line x1="1526.6" y1="687.6" x2="1526.6" y2="715.2" stroke="#111" stroke-width="3.2" stroke-linecap="butt"/><line x1="1525" y1="713.6" x2="1643.5" y2="713.6" stroke="#111" stroke-width="3.3" stroke-linecap="butt"/><line x1="1586.2" y1="558.5" x2="1586.2" y2="713.6" stroke="#111" stroke-width="3.3" stroke-linecap="butt"/><circle cx="1586.2" cy="558.5" r="2.6" fill="#eee" stroke="#555" stroke-width="0.8"/><circle cx="1645.6" cy="558.5" r="2.6" fill="#eee" stroke="#555" stroke-width="0.8"/><circle cx="1586.2" cy="636.0" r="2.6" fill="#eee" stroke="#555" stroke-width="0.8"/><circle cx="1645.6" cy="636.0" r="2.6" fill="#eee" stroke="#555" stroke-width="0.8"/><circle cx="1526.6" cy="636.0" r="2.6" fill="#eee" stroke="#555" stroke-width="0.8"/><circle cx="1526.6" cy="713.6" r="2.6" fill="#eee" stroke="#555" stroke-width="0.8"/><circle cx="1586.2" cy="713.6" r="2.6" fill="#eee" stroke="#555" stroke-width="0.8"/><path d="M1586.2 806.3 L1643.6 806.3 L1643.6 824.3 L1621.2 824.3 Q1605.2 824.3 1605.2 840.3 L1605.2 883.8 L1586.2 883.8Z" fill="#dcdcdc" stroke="#777" stroke-width="0.8" /><line x1="1620.2" y1="807.3" x2="1620.2" y2="824.3" stroke="#777" stroke-width="0.7" stroke-linecap="butt"/><line x1="1586.2" y1="841.3" x2="1605.2" y2="841.3" stroke="#777" stroke-width="0.7" stroke-linecap="butt"/><path d="M1588.2 846.3 L1598.8 846.3 L1598.8 881.8" fill="none" stroke="#666" stroke-width="0.9" /><g transform="translate(1605 821.8) rotate(-45)"><rect x="-6.2" y="-3.1" width="12.4" height="6.2" fill="#a9a9a9" stroke="#444" stroke-width="0.8"/><line x1="-7" y1="4.8" x2="7" y2="4.8" stroke="#444" stroke-width="1"/><rect x="-4.6" y="-1.5" width="9.2" height="3" fill="#8a8a8a" stroke="#444" stroke-width="0.5"/></g><path d="M1586.2 883.8 L1528.3 883.8 L1528.3 866.3 L1551.6 866.3 Q1567.6 866.3 1567.6 850.3 L1567.6 806.3 L1586.2 806.3Z" fill="#dcdcdc" stroke="#777" stroke-width="0.8" /><line x1="1552" y1="866.3" x2="1552" y2="882.8" stroke="#777" stroke-width="0.7" stroke-linecap="butt"/><line x1="1567.6" y1="849.3" x2="1586.2" y2="849.3" stroke="#777" stroke-width="0.7" stroke-linecap="butt"/><path d="M1584.2 808.3 L1573.6000000000001 808.3 L1573.6000000000001 843.3 L1584.2 843.3" fill="none" stroke="#666" stroke-width="0.9" /><g transform="translate(1568 867.8) rotate(-45)"><rect x="-6.2" y="-3.1" width="12.4" height="6.2" fill="#a9a9a9" stroke="#444" stroke-width="0.8"/><line x1="-7" y1="4.8" x2="7" y2="4.8" stroke="#444" stroke-width="1"/><rect x="-4.6" y="-1.5" width="9.2" height="3" fill="#8a8a8a" stroke="#444" stroke-width="0.5"/></g><g transform="translate(1545 846.3) rotate(135)"><path d="M9.6 5.8 A11.2 11.2 0 0 1 -9.6 5.8 L-7 4.2 A8.2 8.2 0 0 0 7 4.2 Z" fill="#efefef" stroke="#222" stroke-width="1.1"/><circle r="7.2" fill="#dedede" stroke="#444" stroke-width="0.9"/><rect x="-10" y="-5.6" width="2.3" height="9.4" rx="0.6" fill="#3c3c3c"/><rect x="7.7" y="-5.6" width="2.3" height="9.4" rx="0.6" fill="#3c3c3c"/></g><g transform="translate(1627.2 843.3) rotate(-45)"><path d="M9.6 5.8 A11.2 11.2 0 0 1 -9.6 5.8 L-7 4.2 A8.2 8.2 0 0 0 7 4.2 Z" fill="#efefef" stroke="#222" stroke-width="1.1"/><circle r="7.2" fill="#dedede" stroke="#444" stroke-width="0.9"/><rect x="-10" y="-5.6" width="2.3" height="9.4" rx="0.6" fill="#3c3c3c"/><rect x="7.7" y="-5.6" width="2.3" height="9.4" rx="0.6" fill="#3c3c3c"/></g><path d="M1586.2 883.8 L1643.6 883.8 L1643.6 901.8 L1621.2 901.8 Q1605.2 901.8 1605.2 917.8 L1605.2 960.4 L1586.2 960.4Z" fill="#dcdcdc" stroke="#777" stroke-width="0.8" /><line x1="1620.2" y1="884.8" x2="1620.2" y2="901.8" stroke="#777" stroke-width="0.7" stroke-linecap="butt"/><line x1="1586.2" y1="918.8" x2="1605.2" y2="918.8" stroke="#777" stroke-width="0.7" stroke-linecap="butt"/><path d="M1588.2 923.8 L1598.8 923.8 L1598.8 958.4" fill="none" stroke="#666" stroke-width="0.9" /><g transform="translate(1605 899.3) rotate(-45)"><rect x="-6.2" y="-3.1" width="12.4" height="6.2" fill="#a9a9a9" stroke="#444" stroke-width="0.8"/><line x1="-7" y1="4.8" x2="7" y2="4.8" stroke="#444" stroke-width="1"/><rect x="-4.6" y="-1.5" width="9.2" height="3" fill="#8a8a8a" stroke="#444" stroke-width="0.5"/></g><path d="M1586.2 960.4 L1528.3 960.4 L1528.3 942.9 L1551.6 942.9 Q1567.6 942.9 1567.6 926.9 L1567.6 883.8 L1586.2 883.8Z" fill="#dcdcdc" stroke="#777" stroke-width="0.8" /><line x1="1552" y1="942.9" x2="1552" y2="959.4" stroke="#777" stroke-width="0.7" stroke-linecap="butt"/><line x1="1567.6" y1="926.8" x2="1586.2" y2="926.8" stroke="#777" stroke-width="0.7" stroke-linecap="butt"/><path d="M1584.2 885.8 L1573.6000000000001 885.8 L1573.6000000000001 920.8 L1584.2 920.8" fill="none" stroke="#666" stroke-width="0.9" /><g transform="translate(1568 944.4) rotate(-45)"><rect x="-6.2" y="-3.1" width="12.4" height="6.2" fill="#a9a9a9" stroke="#444" stroke-width="0.8"/><line x1="-7" y1="4.8" x2="7" y2="4.8" stroke="#444" stroke-width="1"/><rect x="-4.6" y="-1.5" width="9.2" height="3" fill="#8a8a8a" stroke="#444" stroke-width="0.5"/></g><g transform="translate(1545 923.8) rotate(135)"><path d="M9.6 5.8 A11.2 11.2 0 0 1 -9.6 5.8 L-7 4.2 A8.2 8.2 0 0 0 7 4.2 Z" fill="#efefef" stroke="#222" stroke-width="1.1"/><circle r="7.2" fill="#dedede" stroke="#444" stroke-width="0.9"/><rect x="-10" y="-5.6" width="2.3" height="9.4" rx="0.6" fill="#3c3c3c"/><rect x="7.7" y="-5.6" width="2.3" height="9.4" rx="0.6" fill="#3c3c3c"/></g><g transform="translate(1627.2 920.8) rotate(-45)"><path d="M9.6 5.8 A11.2 11.2 0 0 1 -9.6 5.8 L-7 4.2 A8.2 8.2 0 0 0 7 4.2 Z" fill="#efefef" stroke="#222" stroke-width="1.1"/><circle r="7.2" fill="#dedede" stroke="#444" stroke-width="0.9"/><rect x="-10" y="-5.6" width="2.3" height="9.4" rx="0.6" fill="#3c3c3c"/><rect x="7.7" y="-5.6" width="2.3" height="9.4" rx="0.6" fill="#3c3c3c"/></g><line x1="1528.7" y1="806.3" x2="1647" y2="806.3" stroke="#111" stroke-width="3.3" stroke-linecap="butt"/><line x1="1645.4" y1="806.3" x2="1645.4" y2="830.8" stroke="#111" stroke-width="3.2" stroke-linecap="butt"/><line x1="1526.6" y1="857.8" x2="1526.6" y2="885.4" stroke="#111" stroke-width="3.2" stroke-linecap="butt"/><line x1="1528.7" y1="883.8" x2="1647" y2="883.8" stroke="#111" stroke-width="3.3" stroke-linecap="butt"/><line x1="1645.4" y1="883.8" x2="1645.4" y2="908.3" stroke="#111" stroke-width="3.2" stroke-linecap="butt"/><line x1="1526.6" y1="934.4" x2="1526.6" y2="962.0" stroke="#111" stroke-width="3.2" stroke-linecap="butt"/><line x1="1525" y1="960.4" x2="1643.5" y2="960.4" stroke="#111" stroke-width="3.3" stroke-linecap="butt"/><line x1="1586.2" y1="806.3" x2="1586.2" y2="960.4" stroke="#111" stroke-width="3.3" stroke-linecap="butt"/><circle cx="1586.2" cy="806.3" r="2.6" fill="#eee" stroke="#555" stroke-width="0.8"/><circle cx="1645.6" cy="806.3" r="2.6" fill="#eee" stroke="#555" stroke-width="0.8"/><circle cx="1586.2" cy="883.8" r="2.6" fill="#eee" stroke="#555" stroke-width="0.8"/><circle cx="1645.6" cy="883.8" r="2.6" fill="#eee" stroke="#555" stroke-width="0.8"/><circle cx="1526.6" cy="883.8" r="2.6" fill="#eee" stroke="#555" stroke-width="0.8"/><circle cx="1526.6" cy="960.4" r="2.6" fill="#eee" stroke="#555" stroke-width="0.8"/><circle cx="1586.2" cy="960.4" r="2.6" fill="#eee" stroke="#555" stroke-width="0.8"/><line x1="1326.5" y1="279.3" x2="1409.3" y2="279.3" stroke="#111" stroke-width="3" stroke-linecap="butt"/><line x1="1455.7" y1="279.3" x2="1542" y2="279.3" stroke="#111" stroke-width="3" stroke-linecap="butt"/><line x1="1328" y1="278" x2="1328" y2="1038" stroke="#111" stroke-width="3" stroke-linecap="butt"/><line x1="1326.5" y1="1036.5" x2="1835.7" y2="1036.5" stroke="#111" stroke-width="3" stroke-linecap="butt"/><line x1="1834.2" y1="231" x2="1834.2" y2="1038" stroke="#111" stroke-width="3" stroke-linecap="butt"/><line x1="1540.5" y1="232.6" x2="1835.7" y2="232.6" stroke="#111" stroke-width="3" stroke-linecap="butt"/><line x1="1542" y1="231" x2="1542" y2="406.7" stroke="#111" stroke-width="3" stroke-linecap="butt"/><line x1="1537.4" y1="405.2" x2="1618" y2="405.2" stroke="#111" stroke-width="3" stroke-linecap="butt"/><line x1="1664.8" y1="405.2" x2="1835" y2="405.2" stroke="#111" stroke-width="3" stroke-linecap="butt"/><rect x="1326.1" y="553.7" width="3.8" height="44.799999999999955" fill="#cfcfcf" stroke="#8a8a8a" stroke-width="0.5"/><rect x="1326.1" y="609.6" width="3.8" height="44.39999999999998" fill="#cfcfcf" stroke="#8a8a8a" stroke-width="0.5"/><rect x="1326.1" y="697.6" width="3.8" height="45.39999999999998" fill="#cfcfcf" stroke="#8a8a8a" stroke-width="0.5"/><rect x="1326.1" y="752" width="3.8" height="45.39999999999998" fill="#cfcfcf" stroke="#8a8a8a" stroke-width="0.5"/><rect x="1326.1" y="830.7" width="3.8" height="45.299999999999955" fill="#cfcfcf" stroke="#8a8a8a" stroke-width="0.5"/><rect x="1326.1" y="884.4" width="3.8" height="27.600000000000023" fill="#cfcfcf" stroke="#8a8a8a" stroke-width="0.5"/><rect x="1832.3" y="420.7" width="3.8" height="45.10000000000002" fill="#cfcfcf" stroke="#8a8a8a" stroke-width="0.5"/><rect x="1832.3" y="477" width="3.8" height="45" fill="#cfcfcf" stroke="#8a8a8a" stroke-width="0.5"/><rect x="1832.3" y="564.4" width="3.8" height="45.39999999999998" fill="#cfcfcf" stroke="#8a8a8a" stroke-width="0.5"/><rect x="1832.3" y="620.7" width="3.8" height="44.5" fill="#cfcfcf" stroke="#8a8a8a" stroke-width="0.5"/><rect x="1832.3" y="697.8" width="3.8" height="45.200000000000045" fill="#cfcfcf" stroke="#8a8a8a" stroke-width="0.5"/><rect x="1832.3" y="752" width="3.8" height="45.39999999999998" fill="#cfcfcf" stroke="#8a8a8a" stroke-width="0.5"/><rect x="1832.3" y="869.6" width="3.8" height="46.39999999999998" fill="#cfcfcf" stroke="#8a8a8a" stroke-width="0.5"/><rect x="1832.3" y="924.4" width="3.8" height="44.5" fill="#cfcfcf" stroke="#8a8a8a" stroke-width="0.5"/><rect x="1832.3" y="980" width="3.8" height="43.5" fill="#cfcfcf" stroke="#8a8a8a" stroke-width="0.5"/><line x1="1433.9" y1="405" x2="1433.9" y2="432.4" stroke="#111" stroke-width="2.6" stroke-linecap="butt"/><line x1="1433.9" y1="453.7" x2="1433.9" y2="499" stroke="#111" stroke-width="2.6" stroke-linecap="butt"/><line x1="1433.9" y1="520.4" x2="1433.9" y2="634.6" stroke="#111" stroke-width="2.6" stroke-linecap="butt"/><line x1="1433.9" y1="656.3" x2="1433.9" y2="697.6" stroke="#111" stroke-width="2.6" stroke-linecap="butt"/><line x1="1433.9" y1="719.8" x2="1433.9" y2="836.3" stroke="#111" stroke-width="2.6" stroke-linecap="butt"/><line x1="1433.9" y1="858.1" x2="1433.9" y2="968.5" stroke="#111" stroke-width="2.6" stroke-linecap="butt"/><line x1="1433.9" y1="990.7" x2="1433.9" y2="1036.5" stroke="#111" stroke-width="2.6" stroke-linecap="butt"/><line x1="1328" y1="473.5" x2="1432.6" y2="473.5" stroke="#111" stroke-width="3" stroke-linecap="butt"/><line x1="1328" y1="537.4" x2="1432.6" y2="537.4" stroke="#111" stroke-width="3" stroke-linecap="butt"/><line x1="1328" y1="676.9" x2="1432.6" y2="676.9" stroke="#111" stroke-width="2.5" stroke-linecap="butt"/><line x1="1328" y1="817.4" x2="1432.6" y2="817.4" stroke="#111" stroke-width="2.5" stroke-linecap="butt"/><line x1="1728.5" y1="405" x2="1728.5" y2="423.1" stroke="#111" stroke-width="2.2" stroke-linecap="butt"/><line x1="1728.5" y1="445.4" x2="1728.5" y2="641.9" stroke="#111" stroke-width="2.2" stroke-linecap="butt"/><line x1="1728.5" y1="663.1" x2="1728.5" y2="703" stroke="#111" stroke-width="2.2" stroke-linecap="butt"/><line x1="1728.5" y1="725.2" x2="1728.5" y2="887.3" stroke="#111" stroke-width="2.2" stroke-linecap="butt"/><line x1="1728.5" y1="1006.9" x2="1728.5" y2="1036.5" stroke="#111" stroke-width="2.2" stroke-linecap="butt"/><line x1="1728.5" y1="544" x2="1834" y2="544" stroke="#111" stroke-width="2.5" stroke-linecap="butt"/><line x1="1728.5" y1="684.4" x2="1834" y2="684.4" stroke="#111" stroke-width="2.5" stroke-linecap="butt"/><line x1="1728.5" y1="816.5" x2="1834" y2="816.5" stroke="#111" stroke-width="2.5" stroke-linecap="butt"/><path d="M1409.7 279 L1409.7 301.5 Q1428 299 1432.6 282 Q1437 299 1455.5 301.5 L1455.5 279" fill="none" stroke="#555" stroke-width="1" /><path d="M1618.7 405 L1618.7 382 Q1636 385 1641 402.4 Q1646 385 1664.8 382 L1664.8 405" fill="none" stroke="#555" stroke-width="1" /><path d="M1433.9 432.4 Q1414.6 432.4 1414.6 447.7 L1414.6 453.7 L1433.9 453.7" fill="none" stroke="#555" stroke-width="1" /><path d="M1433.9 499 Q1414.6 499 1414.6 514.4 L1414.6 520.4 L1433.9 520.4" fill="none" stroke="#555" stroke-width="1" /><path d="M1433.9 634.6 Q1414.6 634.6 1414.6 650.3 L1414.6 656.3 L1433.9 656.3" fill="none" stroke="#555" stroke-width="1" /><path d="M1433.9 719.8 Q1414.6 719.8 1414.6 703.6 L1414.6 697.6 L1433.9 697.6" fill="none" stroke="#555" stroke-width="1" /><path d="M1433.9 858.1 Q1414.6 858.1 1414.6 842.3 L1414.6 836.3 L1433.9 836.3" fill="none" stroke="#555" stroke-width="1" /><path d="M1433.9 990.7 Q1414.6 990.7 1414.6 974.5 L1414.6 968.5 L1433.9 968.5" fill="none" stroke="#555" stroke-width="1" /><path d="M1728.5 445.4 Q1748.5 445.4 1748.5 429.1 L1748.5 423.1 L1728.5 423.1" fill="none" stroke="#555" stroke-width="1" /><path d="M1728.5 641.9 Q1748.5 641.9 1748.5 657.1 L1748.5 663.1 L1728.5 663.1" fill="none" stroke="#555" stroke-width="1" /><path d="M1728.5 725.2 Q1748.5 725.2 1748.5 709 L1748.5 703 L1728.5 703" fill="none" stroke="#555" stroke-width="1" /><text x="1648.5" y="257" font-size="11.5" font-weight="700" font-family="Liberation Sans, sans-serif" fill="#111" textLength="81.5" lengthAdjust="spacingAndGlyphs" text-anchor="start">CONFERENCE</text><text x="1408" y="352" font-size="11.5" font-weight="700" font-family="Liberation Sans, sans-serif" fill="#111" textLength="67.6" lengthAdjust="spacingAndGlyphs" text-anchor="start">RECEPTION</text><text x="1547.6" y="454.8" font-size="11.5" font-weight="700" font-family="Liberation Sans, sans-serif" fill="#111" textLength="75.9" lengthAdjust="spacingAndGlyphs" text-anchor="start">OPEN SPACE</text><text x="1753.3" y="983.7" font-size="11.5" font-weight="700" font-family="Liberation Sans, sans-serif" fill="#111" textLength="51" lengthAdjust="spacingAndGlyphs" text-anchor="start">KITCHEN</text><text x="1349.3" y="992" font-size="11.5" font-weight="700" font-family="Liberation Sans, sans-serif" fill="#111" textLength="67" lengthAdjust="spacingAndGlyphs" text-anchor="start">TECHNICAL</text><text x="1365.4" y="1005.9" font-size="11.5" font-weight="700" font-family="Liberation Sans, sans-serif" fill="#111" textLength="34.8" lengthAdjust="spacingAndGlyphs" text-anchor="start">ROOM</text><circle cx="1384.3" cy="451.3" r="30.5" fill="rgba(0,105,92,0.10)"/><circle cx="1384.3" cy="451.3" r="25.6" fill="rgba(0,105,92,0.17)"/><circle cx="1384.3" cy="451.3" r="20.7" fill="#00695c"/><circle cx="1586.5" cy="754.8" r="30.5" fill="rgba(0,105,92,0.10)"/><circle cx="1586.5" cy="754.8" r="25.6" fill="rgba(0,105,92,0.17)"/><circle cx="1586.5" cy="754.8" r="20.7" fill="#00695c"/><circle cx="1384.3" cy="983.6" r="30.5" fill="rgba(0,105,92,0.10)"/><circle cx="1384.3" cy="983.6" r="25.6" fill="rgba(0,105,92,0.17)"/><circle cx="1384.3" cy="983.6" r="20.7" fill="#00695c"/><g fill="none" stroke="rgba(255,255,255,0.78)" stroke-width="0.95" stroke-linecap="round" stroke-linejoin="round"><path d="M1383.3 441.6 C1380.6 446.6 1377.2 451.6 1377.2 455.6 A6 6 0 0 0 1387.6 459.6 M1383.3 441.6 C1384.8 444.6 1386.6 447 1388 449"/><circle cx="1387.9" cy="453.5" r="4.4"/><circle cx="1387.9" cy="453.5" r="2.8" stroke-width="0.6"/><path d="M1387.2 454.2 L1388.8 452.6" stroke-width="1"/><path d="M1581.2 765.6 A5 5 0 0 1 1579.7 756.2 A6.3 6.3 0 0 1 1589.5 753.4 M1594.6 756.6 A4.7 4.7 0 0 1 1592.6 765.6 Z M1581.2 765.6 L1592.6 765.6" stroke-width="1.05"/><path d="M1587.6 753.2 A5.3 5.3 0 1 1 1594.8 755.4 M1589.4 753.6 A3.6 3.6 0 0 1 1595.5 752.2" /><path d="M1592 748.6 L1591.4 751.4" stroke-width="1"/><path d="M1584.5 758.6 h-2.6 v4.2 h2.6 M1589.2 758.6 h-2.6 v4.2 h2.6 M1592 758 v3.4 M1592 762.6 v0.4" stroke-width="1.1" stroke-linecap="butt"/><path d="M1375.3 990.4 A10.6 10.6 0 1 1 1389.2 993.5 M1392.4 993.6 L1386.6 993.6 L1389.6 990.4" /><path d="M1385 977.4 L1381.6 984.8 L1385.6 983.7 L1382.8 990" stroke-width="1.1"/><path d="M1375.8 981.4 A8.6 8.6 0 0 1 1380.2 976.6" stroke-width="2.6" stroke-dasharray="1.1 0.7" stroke-linecap="butt"/><circle cx="1378.6" cy="992.2" r="1.9" stroke-width="1.3" stroke-dasharray="1 0.7"/></g><rect x="1296.4" y="381.4" width="175.0" height="36.60000000000002" rx="10" fill="#fff" stroke="#00695c" stroke-width="2.2"/><rect x="1465.6" y="685.2" width="243.4000000000001" height="37.59999999999991" rx="10" fill="#fff" stroke="#00695c" stroke-width="2.2"/><rect x="1313.2" y="914" width="141.5" height="36.799999999999955" rx="10" fill="#fff" stroke="#00695c" stroke-width="2.2"/></svg>
<span class="t" style="letter-spacing:0.041px;left:1310.83px;top:392.00px;font-size:17.5px;color:#0b0b12;font-weight:700;">Water Flow Meter</span>
<span class="t" style="letter-spacing:0.063px;left:1480.62px;top:696.00px;font-size:17.5px;color:#0b0b12;font-weight:700;">Indoor Air Quality Sensor</span>
<span class="t" style="letter-spacing:0.089px;left:1328.42px;top:925.00px;font-size:17.5px;color:#0b0b12;font-weight:700;">Energy Meter</span>
<div class="b" style="left:1278.6px;top:224.6px;width:40.4px;height:77.6px;border:2px solid rgba(0,0,0,0.22);border-radius:5px;background:#fff;overflow:hidden"><div style="position:absolute;left:0;top:36.6px;width:100%;height:1px;background:#ccc"></div><div style="position:absolute;left:0;top:37.6px;width:100%;height:40px;background:#f4f4f4"></div></div>
<span class="t" style="left:1291.2px;top:233.6px;font:bold 27px 'Liberation Mono',monospace;line-height:1;color:#000">+</span>
<span class="t" style="left:1291px;top:268.7px;font:27px 'Liberation Sans',sans-serif;line-height:1;color:#bbb">−</span>
</body></html>
